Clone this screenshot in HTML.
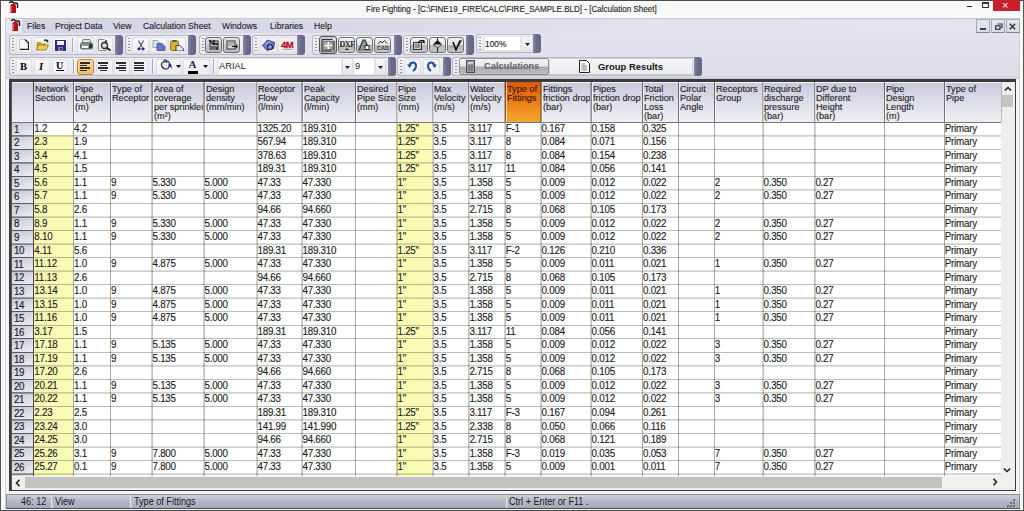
<!DOCTYPE html><html><head><meta charset="utf-8"><style>

*{box-sizing:border-box;margin:0;padding:0}
html,body{width:1024px;height:511px;overflow:hidden;background:#f3f3f6;font-family:"Liberation Sans",sans-serif;color:#222}
.a{position:absolute}
.t{position:absolute;white-space:pre;line-height:1}
.k{-webkit-text-stroke:0.12px currentColor}

</style></head><body>
<div class="a" style="left:0;top:0;width:1024px;height:511px;background:#f9f9f9"></div>
<div class="a" style="left:0;top:0;width:1024px;height:1px;background:#4a4a4a"></div>
<div class="a" style="left:0;top:0;width:1px;height:511px;background:#555"></div>
<div class="a" style="left:1023px;top:0;width:1px;height:511px;background:#555"></div>
<div class="a" style="left:0;top:510px;width:1024px;height:1px;background:#4a4a4a"></div>
<div class="a" style="left:5px;top:18px;width:1015px;height:492px;background:#f6f6f8;border-left:1px solid #cfcfd8;border-top:1px solid #c8c8d2;border-right:1px solid #d0d0d8"></div>
<div class="a" style="left:6px;top:19px;width:1013px;height:57px;background:linear-gradient(#e4e4ee,#dedee8)"></div>
<div class="a" style="left:6px;top:76px;width:1013px;height:3px;background:linear-gradient(#dcdce6,#c8c8d0)"></div>
<div class="a" style="left:9px;top:79px;width:1007px;height:412px;background:#3a3a3a"></div>
<div class="a" style="left:11px;top:82px;width:1px;height:407px;background:#5a5a5a"></div>
<div class="a" style="left:12px;top:82px;width:989px;height:40px;background:linear-gradient(#c8c8da,#dadae6 40%,#e8e8ef 80%,#eeeef2)"></div>
<div class="a" style="left:12px;top:82px;width:989px;height:1px;background:#f4f4f8"></div>
<div class="a" style="left:12px;top:122px;width:989px;height:354px;background:#fff"></div>
<div class="a" style="left:1001px;top:82px;width:14px;height:394px;background:#eeeeee"></div>
<div class="a" style="left:34px;top:135px;width:39px;height:341px;background:#fafcb6"></div>
<div class="a" style="left:396px;top:122px;width:36px;height:354px;background:#fafcb6"></div>
<div class="a" style="left:505px;top:82px;width:36px;height:40px;background:linear-gradient(#dc5a08,#ea7a14 45%,#f29a2a 85%,#f4a636)"></div>
<div class="a" style="left:12px;top:122px;width:22px;height:13px;background:linear-gradient(165deg,#c4c4d6,#dcdce6 55%,#ececf2)"></div>
<div class="a" style="left:12px;top:135px;width:22px;height:14px;background:linear-gradient(165deg,#c4c4d6,#dcdce6 55%,#ececf2)"></div>
<div class="a" style="left:12px;top:149px;width:22px;height:13px;background:linear-gradient(165deg,#c4c4d6,#dcdce6 55%,#ececf2)"></div>
<div class="a" style="left:12px;top:162px;width:22px;height:14px;background:linear-gradient(165deg,#c4c4d6,#dcdce6 55%,#ececf2)"></div>
<div class="a" style="left:12px;top:176px;width:22px;height:13px;background:linear-gradient(165deg,#c4c4d6,#dcdce6 55%,#ececf2)"></div>
<div class="a" style="left:12px;top:189px;width:22px;height:14px;background:linear-gradient(165deg,#c4c4d6,#dcdce6 55%,#ececf2)"></div>
<div class="a" style="left:12px;top:203px;width:22px;height:14px;background:linear-gradient(165deg,#c4c4d6,#dcdce6 55%,#ececf2)"></div>
<div class="a" style="left:12px;top:217px;width:22px;height:13px;background:linear-gradient(165deg,#c4c4d6,#dcdce6 55%,#ececf2)"></div>
<div class="a" style="left:12px;top:230px;width:22px;height:14px;background:linear-gradient(165deg,#c4c4d6,#dcdce6 55%,#ececf2)"></div>
<div class="a" style="left:12px;top:244px;width:22px;height:13px;background:linear-gradient(165deg,#c4c4d6,#dcdce6 55%,#ececf2)"></div>
<div class="a" style="left:12px;top:257px;width:22px;height:14px;background:linear-gradient(165deg,#c4c4d6,#dcdce6 55%,#ececf2)"></div>
<div class="a" style="left:12px;top:271px;width:22px;height:13px;background:linear-gradient(165deg,#c4c4d6,#dcdce6 55%,#ececf2)"></div>
<div class="a" style="left:12px;top:284px;width:22px;height:14px;background:linear-gradient(165deg,#c4c4d6,#dcdce6 55%,#ececf2)"></div>
<div class="a" style="left:12px;top:298px;width:22px;height:13px;background:linear-gradient(165deg,#c4c4d6,#dcdce6 55%,#ececf2)"></div>
<div class="a" style="left:12px;top:311px;width:22px;height:14px;background:linear-gradient(165deg,#c4c4d6,#dcdce6 55%,#ececf2)"></div>
<div class="a" style="left:12px;top:325px;width:22px;height:13px;background:linear-gradient(165deg,#c4c4d6,#dcdce6 55%,#ececf2)"></div>
<div class="a" style="left:12px;top:338px;width:22px;height:14px;background:linear-gradient(165deg,#c4c4d6,#dcdce6 55%,#ececf2)"></div>
<div class="a" style="left:12px;top:352px;width:22px;height:13px;background:linear-gradient(165deg,#c4c4d6,#dcdce6 55%,#ececf2)"></div>
<div class="a" style="left:12px;top:365px;width:22px;height:14px;background:linear-gradient(165deg,#c4c4d6,#dcdce6 55%,#ececf2)"></div>
<div class="a" style="left:12px;top:379px;width:22px;height:13px;background:linear-gradient(165deg,#c4c4d6,#dcdce6 55%,#ececf2)"></div>
<div class="a" style="left:12px;top:392px;width:22px;height:14px;background:linear-gradient(165deg,#c4c4d6,#dcdce6 55%,#ececf2)"></div>
<div class="a" style="left:12px;top:406px;width:22px;height:13px;background:linear-gradient(165deg,#c4c4d6,#dcdce6 55%,#ececf2)"></div>
<div class="a" style="left:12px;top:419px;width:22px;height:14px;background:linear-gradient(165deg,#c4c4d6,#dcdce6 55%,#ececf2)"></div>
<div class="a" style="left:12px;top:433px;width:22px;height:14px;background:linear-gradient(165deg,#c4c4d6,#dcdce6 55%,#ececf2)"></div>
<div class="a" style="left:12px;top:447px;width:22px;height:13px;background:linear-gradient(165deg,#c4c4d6,#dcdce6 55%,#ececf2)"></div>
<div class="a" style="left:12px;top:460px;width:22px;height:14px;background:linear-gradient(165deg,#c4c4d6,#dcdce6 55%,#ececf2)"></div>
<div class="a" style="left:12px;top:474px;width:22px;height:2px;background:linear-gradient(165deg,#c4c4d6,#dcdce6 55%,#ececf2)"></div>
<div class="a" style="left:33px;top:82px;width:1px;height:394px;background:rgba(70,70,70,1.00)"></div>
<div class="a" style="left:73px;top:122px;width:1px;height:354px;background:rgba(0,0,0,0.33)"></div>
<div class="a" style="left:73px;top:82px;width:1px;height:40px;background:rgba(0,0,0,0.50)"></div>
<div class="a" style="left:74px;top:82px;width:1px;height:40px;background:rgba(255,255,255,0.6)"></div>
<div class="a" style="left:110px;top:122px;width:1px;height:354px;background:rgba(0,0,0,0.33)"></div>
<div class="a" style="left:110px;top:82px;width:1px;height:40px;background:rgba(0,0,0,0.50)"></div>
<div class="a" style="left:111px;top:82px;width:1px;height:40px;background:rgba(255,255,255,0.6)"></div>
<div class="a" style="left:151px;top:122px;width:1px;height:354px;background:rgba(0,0,0,0.17)"></div>
<div class="a" style="left:152px;top:122px;width:1px;height:354px;background:rgba(0,0,0,0.24)"></div>
<div class="a" style="left:151px;top:82px;width:1px;height:40px;background:rgba(0,0,0,0.25)"></div>
<div class="a" style="left:152px;top:82px;width:1px;height:40px;background:rgba(0,0,0,0.36)"></div>
<div class="a" style="left:153px;top:82px;width:1px;height:40px;background:rgba(255,255,255,0.6)"></div>
<div class="a" style="left:203px;top:122px;width:1px;height:354px;background:rgba(0,0,0,0.17)"></div>
<div class="a" style="left:204px;top:122px;width:1px;height:354px;background:rgba(0,0,0,0.24)"></div>
<div class="a" style="left:203px;top:82px;width:1px;height:40px;background:rgba(0,0,0,0.25)"></div>
<div class="a" style="left:204px;top:82px;width:1px;height:40px;background:rgba(0,0,0,0.36)"></div>
<div class="a" style="left:205px;top:82px;width:1px;height:40px;background:rgba(255,255,255,0.6)"></div>
<div class="a" style="left:256px;top:122px;width:1px;height:354px;background:rgba(0,0,0,0.17)"></div>
<div class="a" style="left:257px;top:122px;width:1px;height:354px;background:rgba(0,0,0,0.24)"></div>
<div class="a" style="left:256px;top:82px;width:1px;height:40px;background:rgba(0,0,0,0.25)"></div>
<div class="a" style="left:257px;top:82px;width:1px;height:40px;background:rgba(0,0,0,0.36)"></div>
<div class="a" style="left:257px;top:82px;width:1px;height:40px;background:rgba(255,255,255,0.6)"></div>
<div class="a" style="left:301px;top:122px;width:1px;height:354px;background:rgba(0,0,0,0.17)"></div>
<div class="a" style="left:302px;top:122px;width:1px;height:354px;background:rgba(0,0,0,0.24)"></div>
<div class="a" style="left:301px;top:82px;width:1px;height:40px;background:rgba(0,0,0,0.25)"></div>
<div class="a" style="left:302px;top:82px;width:1px;height:40px;background:rgba(0,0,0,0.36)"></div>
<div class="a" style="left:303px;top:82px;width:1px;height:40px;background:rgba(255,255,255,0.6)"></div>
<div class="a" style="left:355px;top:122px;width:1px;height:354px;background:rgba(0,0,0,0.33)"></div>
<div class="a" style="left:355px;top:82px;width:1px;height:40px;background:rgba(0,0,0,0.50)"></div>
<div class="a" style="left:356px;top:82px;width:1px;height:40px;background:rgba(255,255,255,0.6)"></div>
<div class="a" style="left:396px;top:122px;width:1px;height:354px;background:rgba(0,0,0,0.17)"></div>
<div class="a" style="left:397px;top:122px;width:1px;height:354px;background:rgba(0,0,0,0.24)"></div>
<div class="a" style="left:396px;top:82px;width:1px;height:40px;background:rgba(0,0,0,0.25)"></div>
<div class="a" style="left:397px;top:82px;width:1px;height:40px;background:rgba(0,0,0,0.36)"></div>
<div class="a" style="left:397px;top:82px;width:1px;height:40px;background:rgba(255,255,255,0.6)"></div>
<div class="a" style="left:432px;top:122px;width:1px;height:354px;background:rgba(0,0,0,0.17)"></div>
<div class="a" style="left:433px;top:122px;width:1px;height:354px;background:rgba(0,0,0,0.24)"></div>
<div class="a" style="left:432px;top:82px;width:1px;height:40px;background:rgba(0,0,0,0.25)"></div>
<div class="a" style="left:433px;top:82px;width:1px;height:40px;background:rgba(0,0,0,0.36)"></div>
<div class="a" style="left:433px;top:82px;width:1px;height:40px;background:rgba(255,255,255,0.6)"></div>
<div class="a" style="left:468px;top:122px;width:1px;height:354px;background:rgba(0,0,0,0.24)"></div>
<div class="a" style="left:469px;top:122px;width:1px;height:354px;background:rgba(0,0,0,0.17)"></div>
<div class="a" style="left:468px;top:82px;width:1px;height:40px;background:rgba(0,0,0,0.36)"></div>
<div class="a" style="left:469px;top:82px;width:1px;height:40px;background:rgba(0,0,0,0.25)"></div>
<div class="a" style="left:469px;top:82px;width:1px;height:40px;background:rgba(255,255,255,0.6)"></div>
<div class="a" style="left:504px;top:122px;width:1px;height:354px;background:rgba(0,0,0,0.17)"></div>
<div class="a" style="left:505px;top:122px;width:1px;height:354px;background:rgba(0,0,0,0.24)"></div>
<div class="a" style="left:504px;top:82px;width:1px;height:40px;background:rgba(0,0,0,0.25)"></div>
<div class="a" style="left:505px;top:82px;width:1px;height:40px;background:rgba(0,0,0,0.36)"></div>
<div class="a" style="left:506px;top:82px;width:1px;height:40px;background:rgba(255,255,255,0.6)"></div>
<div class="a" style="left:540px;top:122px;width:1px;height:354px;background:rgba(0,0,0,0.17)"></div>
<div class="a" style="left:541px;top:122px;width:1px;height:354px;background:rgba(0,0,0,0.24)"></div>
<div class="a" style="left:540px;top:82px;width:1px;height:40px;background:rgba(0,0,0,0.25)"></div>
<div class="a" style="left:541px;top:82px;width:1px;height:40px;background:rgba(0,0,0,0.36)"></div>
<div class="a" style="left:542px;top:82px;width:1px;height:40px;background:rgba(255,255,255,0.6)"></div>
<div class="a" style="left:590px;top:122px;width:1px;height:354px;background:rgba(0,0,0,0.17)"></div>
<div class="a" style="left:591px;top:122px;width:1px;height:354px;background:rgba(0,0,0,0.24)"></div>
<div class="a" style="left:590px;top:82px;width:1px;height:40px;background:rgba(0,0,0,0.25)"></div>
<div class="a" style="left:591px;top:82px;width:1px;height:40px;background:rgba(0,0,0,0.36)"></div>
<div class="a" style="left:592px;top:82px;width:1px;height:40px;background:rgba(255,255,255,0.6)"></div>
<div class="a" style="left:642px;top:122px;width:1px;height:354px;background:rgba(0,0,0,0.33)"></div>
<div class="a" style="left:642px;top:82px;width:1px;height:40px;background:rgba(0,0,0,0.50)"></div>
<div class="a" style="left:643px;top:82px;width:1px;height:40px;background:rgba(255,255,255,0.6)"></div>
<div class="a" style="left:678px;top:122px;width:1px;height:354px;background:rgba(0,0,0,0.33)"></div>
<div class="a" style="left:678px;top:82px;width:1px;height:40px;background:rgba(0,0,0,0.50)"></div>
<div class="a" style="left:679px;top:82px;width:1px;height:40px;background:rgba(255,255,255,0.6)"></div>
<div class="a" style="left:714px;top:122px;width:1px;height:354px;background:rgba(0,0,0,0.33)"></div>
<div class="a" style="left:714px;top:82px;width:1px;height:40px;background:rgba(0,0,0,0.50)"></div>
<div class="a" style="left:715px;top:82px;width:1px;height:40px;background:rgba(255,255,255,0.6)"></div>
<div class="a" style="left:762px;top:122px;width:1px;height:354px;background:rgba(0,0,0,0.17)"></div>
<div class="a" style="left:763px;top:122px;width:1px;height:354px;background:rgba(0,0,0,0.24)"></div>
<div class="a" style="left:762px;top:82px;width:1px;height:40px;background:rgba(0,0,0,0.25)"></div>
<div class="a" style="left:763px;top:82px;width:1px;height:40px;background:rgba(0,0,0,0.36)"></div>
<div class="a" style="left:763px;top:82px;width:1px;height:40px;background:rgba(255,255,255,0.6)"></div>
<div class="a" style="left:814px;top:122px;width:1px;height:354px;background:rgba(0,0,0,0.24)"></div>
<div class="a" style="left:815px;top:122px;width:1px;height:354px;background:rgba(0,0,0,0.17)"></div>
<div class="a" style="left:814px;top:82px;width:1px;height:40px;background:rgba(0,0,0,0.36)"></div>
<div class="a" style="left:815px;top:82px;width:1px;height:40px;background:rgba(0,0,0,0.25)"></div>
<div class="a" style="left:815px;top:82px;width:1px;height:40px;background:rgba(255,255,255,0.6)"></div>
<div class="a" style="left:884px;top:122px;width:1px;height:354px;background:rgba(0,0,0,0.33)"></div>
<div class="a" style="left:884px;top:82px;width:1px;height:40px;background:rgba(0,0,0,0.50)"></div>
<div class="a" style="left:885px;top:82px;width:1px;height:40px;background:rgba(255,255,255,0.6)"></div>
<div class="a" style="left:944px;top:122px;width:1px;height:354px;background:rgba(0,0,0,0.33)"></div>
<div class="a" style="left:944px;top:82px;width:1px;height:40px;background:rgba(0,0,0,0.50)"></div>
<div class="a" style="left:945px;top:82px;width:1px;height:40px;background:rgba(255,255,255,0.6)"></div>
<div class="a" style="left:1001px;top:82px;width:1px;height:40px;background:rgba(150,150,150,0.60)"></div>
<div class="a" style="left:12px;top:122px;width:989px;height:1px;background:rgba(120,120,120,1.00)"></div>
<div class="a" style="left:34px;top:135px;width:967px;height:1px;background:rgba(0,0,0,0.19)"></div>
<div class="a" style="left:34px;top:136px;width:967px;height:1px;background:rgba(0,0,0,0.13)"></div>
<div class="a" style="left:12px;top:135px;width:22px;height:1px;background:rgba(90,90,90,0.72)"></div>
<div class="a" style="left:12px;top:136px;width:22px;height:1px;background:rgba(90,90,90,0.50)"></div>
<div class="a" style="left:34px;top:149px;width:967px;height:1px;background:rgba(0,0,0,0.26)"></div>
<div class="a" style="left:12px;top:149px;width:22px;height:1px;background:rgba(90,90,90,1.00)"></div>
<div class="a" style="left:34px;top:162px;width:967px;height:1px;background:rgba(0,0,0,0.19)"></div>
<div class="a" style="left:34px;top:163px;width:967px;height:1px;background:rgba(0,0,0,0.13)"></div>
<div class="a" style="left:12px;top:162px;width:22px;height:1px;background:rgba(90,90,90,0.72)"></div>
<div class="a" style="left:12px;top:163px;width:22px;height:1px;background:rgba(90,90,90,0.50)"></div>
<div class="a" style="left:34px;top:176px;width:967px;height:1px;background:rgba(0,0,0,0.26)"></div>
<div class="a" style="left:12px;top:176px;width:22px;height:1px;background:rgba(90,90,90,1.00)"></div>
<div class="a" style="left:34px;top:189px;width:967px;height:1px;background:rgba(0,0,0,0.19)"></div>
<div class="a" style="left:34px;top:190px;width:967px;height:1px;background:rgba(0,0,0,0.13)"></div>
<div class="a" style="left:12px;top:189px;width:22px;height:1px;background:rgba(90,90,90,0.72)"></div>
<div class="a" style="left:12px;top:190px;width:22px;height:1px;background:rgba(90,90,90,0.50)"></div>
<div class="a" style="left:34px;top:203px;width:967px;height:1px;background:rgba(0,0,0,0.26)"></div>
<div class="a" style="left:12px;top:203px;width:22px;height:1px;background:rgba(90,90,90,1.00)"></div>
<div class="a" style="left:34px;top:216px;width:967px;height:1px;background:rgba(0,0,0,0.13)"></div>
<div class="a" style="left:34px;top:217px;width:967px;height:1px;background:rgba(0,0,0,0.19)"></div>
<div class="a" style="left:12px;top:216px;width:22px;height:1px;background:rgba(90,90,90,0.50)"></div>
<div class="a" style="left:12px;top:217px;width:22px;height:1px;background:rgba(90,90,90,0.72)"></div>
<div class="a" style="left:34px;top:230px;width:967px;height:1px;background:rgba(0,0,0,0.26)"></div>
<div class="a" style="left:12px;top:230px;width:22px;height:1px;background:rgba(90,90,90,1.00)"></div>
<div class="a" style="left:34px;top:243px;width:967px;height:1px;background:rgba(0,0,0,0.13)"></div>
<div class="a" style="left:34px;top:244px;width:967px;height:1px;background:rgba(0,0,0,0.19)"></div>
<div class="a" style="left:12px;top:243px;width:22px;height:1px;background:rgba(90,90,90,0.50)"></div>
<div class="a" style="left:12px;top:244px;width:22px;height:1px;background:rgba(90,90,90,0.72)"></div>
<div class="a" style="left:34px;top:257px;width:967px;height:1px;background:rgba(0,0,0,0.26)"></div>
<div class="a" style="left:12px;top:257px;width:22px;height:1px;background:rgba(90,90,90,1.00)"></div>
<div class="a" style="left:34px;top:270px;width:967px;height:1px;background:rgba(0,0,0,0.13)"></div>
<div class="a" style="left:34px;top:271px;width:967px;height:1px;background:rgba(0,0,0,0.19)"></div>
<div class="a" style="left:12px;top:270px;width:22px;height:1px;background:rgba(90,90,90,0.50)"></div>
<div class="a" style="left:12px;top:271px;width:22px;height:1px;background:rgba(90,90,90,0.72)"></div>
<div class="a" style="left:34px;top:284px;width:967px;height:1px;background:rgba(0,0,0,0.26)"></div>
<div class="a" style="left:12px;top:284px;width:22px;height:1px;background:rgba(90,90,90,1.00)"></div>
<div class="a" style="left:34px;top:297px;width:967px;height:1px;background:rgba(0,0,0,0.13)"></div>
<div class="a" style="left:34px;top:298px;width:967px;height:1px;background:rgba(0,0,0,0.19)"></div>
<div class="a" style="left:12px;top:297px;width:22px;height:1px;background:rgba(90,90,90,0.50)"></div>
<div class="a" style="left:12px;top:298px;width:22px;height:1px;background:rgba(90,90,90,0.72)"></div>
<div class="a" style="left:34px;top:311px;width:967px;height:1px;background:rgba(0,0,0,0.26)"></div>
<div class="a" style="left:12px;top:311px;width:22px;height:1px;background:rgba(90,90,90,1.00)"></div>
<div class="a" style="left:34px;top:325px;width:967px;height:1px;background:rgba(0,0,0,0.26)"></div>
<div class="a" style="left:12px;top:325px;width:22px;height:1px;background:rgba(90,90,90,1.00)"></div>
<div class="a" style="left:34px;top:338px;width:967px;height:1px;background:rgba(0,0,0,0.26)"></div>
<div class="a" style="left:12px;top:338px;width:22px;height:1px;background:rgba(90,90,90,1.00)"></div>
<div class="a" style="left:34px;top:352px;width:967px;height:1px;background:rgba(0,0,0,0.26)"></div>
<div class="a" style="left:12px;top:352px;width:22px;height:1px;background:rgba(90,90,90,1.00)"></div>
<div class="a" style="left:34px;top:365px;width:967px;height:1px;background:rgba(0,0,0,0.19)"></div>
<div class="a" style="left:34px;top:366px;width:967px;height:1px;background:rgba(0,0,0,0.13)"></div>
<div class="a" style="left:12px;top:365px;width:22px;height:1px;background:rgba(90,90,90,0.72)"></div>
<div class="a" style="left:12px;top:366px;width:22px;height:1px;background:rgba(90,90,90,0.50)"></div>
<div class="a" style="left:34px;top:379px;width:967px;height:1px;background:rgba(0,0,0,0.26)"></div>
<div class="a" style="left:12px;top:379px;width:22px;height:1px;background:rgba(90,90,90,1.00)"></div>
<div class="a" style="left:34px;top:392px;width:967px;height:1px;background:rgba(0,0,0,0.19)"></div>
<div class="a" style="left:34px;top:393px;width:967px;height:1px;background:rgba(0,0,0,0.13)"></div>
<div class="a" style="left:12px;top:392px;width:22px;height:1px;background:rgba(90,90,90,0.72)"></div>
<div class="a" style="left:12px;top:393px;width:22px;height:1px;background:rgba(90,90,90,0.50)"></div>
<div class="a" style="left:34px;top:406px;width:967px;height:1px;background:rgba(0,0,0,0.26)"></div>
<div class="a" style="left:12px;top:406px;width:22px;height:1px;background:rgba(90,90,90,1.00)"></div>
<div class="a" style="left:34px;top:419px;width:967px;height:1px;background:rgba(0,0,0,0.19)"></div>
<div class="a" style="left:34px;top:420px;width:967px;height:1px;background:rgba(0,0,0,0.13)"></div>
<div class="a" style="left:12px;top:419px;width:22px;height:1px;background:rgba(90,90,90,0.72)"></div>
<div class="a" style="left:12px;top:420px;width:22px;height:1px;background:rgba(90,90,90,0.50)"></div>
<div class="a" style="left:34px;top:433px;width:967px;height:1px;background:rgba(0,0,0,0.26)"></div>
<div class="a" style="left:12px;top:433px;width:22px;height:1px;background:rgba(90,90,90,1.00)"></div>
<div class="a" style="left:34px;top:446px;width:967px;height:1px;background:rgba(0,0,0,0.13)"></div>
<div class="a" style="left:34px;top:447px;width:967px;height:1px;background:rgba(0,0,0,0.19)"></div>
<div class="a" style="left:12px;top:446px;width:22px;height:1px;background:rgba(90,90,90,0.50)"></div>
<div class="a" style="left:12px;top:447px;width:22px;height:1px;background:rgba(90,90,90,0.72)"></div>
<div class="a" style="left:34px;top:460px;width:967px;height:1px;background:rgba(0,0,0,0.26)"></div>
<div class="a" style="left:12px;top:460px;width:22px;height:1px;background:rgba(90,90,90,1.00)"></div>
<div class="a" style="left:34px;top:473px;width:967px;height:1px;background:rgba(0,0,0,0.13)"></div>
<div class="a" style="left:34px;top:474px;width:967px;height:1px;background:rgba(0,0,0,0.19)"></div>
<div class="a" style="left:12px;top:473px;width:22px;height:1px;background:rgba(90,90,90,0.50)"></div>
<div class="a" style="left:12px;top:474px;width:22px;height:1px;background:rgba(90,90,90,0.72)"></div>
<div class="t k" style="left:35px;top:84.9px;width:38px;height:38px;overflow:hidden;font-size:9.15px;line-height:9.05px;color:#1e1e1e">Network<br>Section</div>
<div class="t k" style="left:75px;top:84.9px;width:35px;height:38px;overflow:hidden;font-size:9.15px;line-height:9.05px;color:#1e1e1e">Pipe<br>Length<br>(m)</div>
<div class="t k" style="left:112px;top:84.9px;width:39px;height:38px;overflow:hidden;font-size:9.15px;line-height:9.05px;color:#1e1e1e">Type of<br>Receptor</div>
<div class="t k" style="left:154px;top:84.9px;width:49px;height:38px;overflow:hidden;font-size:9.15px;line-height:9.05px;color:#1e1e1e">Area of<br>coverage<br>per sprinkler<br>(m&sup2;)</div>
<div class="t k" style="left:206px;top:84.9px;width:50px;height:38px;overflow:hidden;font-size:9.15px;line-height:9.05px;color:#1e1e1e">Design<br>density<br>(mm/min)</div>
<div class="t k" style="left:258px;top:84.9px;width:43px;height:38px;overflow:hidden;font-size:9.15px;line-height:9.05px;color:#1e1e1e">Receptor<br>Flow<br>(l/min)</div>
<div class="t k" style="left:304px;top:84.9px;width:50px;height:38px;overflow:hidden;font-size:9.15px;line-height:9.05px;color:#1e1e1e">Peak<br>Capacity<br>(l/min)</div>
<div class="t k" style="left:357px;top:84.9px;width:39px;height:38px;overflow:hidden;font-size:9.15px;line-height:9.05px;color:#1e1e1e">Desired<br>Pipe Size<br>(mm)</div>
<div class="t k" style="left:398px;top:84.9px;width:34px;height:38px;overflow:hidden;font-size:9.15px;line-height:9.05px;color:#1e1e1e">Pipe<br>Size<br>(mm)</div>
<div class="t k" style="left:434px;top:84.9px;width:34px;height:38px;overflow:hidden;font-size:9.15px;line-height:9.05px;color:#1e1e1e">Max<br>Velocity<br>(m/s)</div>
<div class="t k" style="left:470px;top:84.9px;width:34px;height:38px;overflow:hidden;font-size:9.15px;line-height:9.05px;color:#1e1e1e">Water<br>Velocity<br>(m/s)</div>
<div class="t k" style="left:507px;top:84.9px;width:33px;height:38px;overflow:hidden;font-size:9.15px;line-height:9.05px;color:#3a1804">Type of<br>Fittings</div>
<div class="t k" style="left:543px;top:84.9px;width:47px;height:38px;overflow:hidden;font-size:9.15px;line-height:9.05px;color:#1e1e1e">Fittings<br>friction drop<br>(bar)</div>
<div class="t k" style="left:593px;top:84.9px;width:49px;height:38px;overflow:hidden;font-size:9.15px;line-height:9.05px;color:#1e1e1e">Pipes<br>friction drop<br>(bar)</div>
<div class="t k" style="left:644px;top:84.9px;width:33px;height:38px;overflow:hidden;font-size:9.15px;line-height:9.05px;color:#1e1e1e">Total<br>Friction<br>Loss<br>(bar)</div>
<div class="t k" style="left:680px;top:84.9px;width:33px;height:38px;overflow:hidden;font-size:9.15px;line-height:9.05px;color:#1e1e1e">Circuit<br>Polar<br>Angle</div>
<div class="t k" style="left:716px;top:84.9px;width:46px;height:38px;overflow:hidden;font-size:9.15px;line-height:9.05px;color:#1e1e1e">Receptors<br>Group</div>
<div class="t k" style="left:764px;top:84.9px;width:50px;height:38px;overflow:hidden;font-size:9.15px;line-height:9.05px;color:#1e1e1e">Required<br>discharge<br>pressure<br>(bar)</div>
<div class="t k" style="left:816px;top:84.9px;width:67px;height:38px;overflow:hidden;font-size:9.15px;line-height:9.05px;color:#1e1e1e">DP due to<br>Different<br>Height<br>(bar)</div>
<div class="t k" style="left:886px;top:84.9px;width:57px;height:38px;overflow:hidden;font-size:9.15px;line-height:9.05px;color:#1e1e1e">Pipe<br>Design<br>Length<br>(m)</div>
<div class="t k" style="left:946px;top:84.9px;width:54px;height:38px;overflow:hidden;font-size:9.15px;line-height:9.05px;color:#1e1e1e">Type of<br>Pipe</div>
<div class="t k" style="left:14px;top:124.6px;font-size:9.8px;letter-spacing:-0.5px;transform:scaleY(1.07);transform-origin:0 2px;color:#1a1a1a">1</div>
<div class="t k" style="left:34.3px;top:122.8px;font-size:9.8px;letter-spacing:-0.25px;transform:scaleY(1.16);transform-origin:0 2px;color:#1c1c1c">1.2</div>
<div class="t k" style="left:74.0px;top:122.8px;font-size:9.8px;letter-spacing:-0.25px;transform:scaleY(1.16);transform-origin:0 2px;color:#1c1c1c">4.2</div>
<div class="t k" style="left:257.5px;top:122.8px;font-size:9.8px;letter-spacing:-0.25px;transform:scaleY(1.16);transform-origin:0 2px;color:#1c1c1c">1325.20</div>
<div class="t k" style="left:302.5px;top:122.8px;font-size:9.8px;letter-spacing:-0.25px;transform:scaleY(1.16);transform-origin:0 2px;color:#1c1c1c">189.310</div>
<div class="t k" style="left:397.5px;top:122.8px;font-size:9.8px;letter-spacing:-0.25px;transform:scaleY(1.16);transform-origin:0 2px;color:#1c1c1c">1.25&quot;</div>
<div class="t k" style="left:433.5px;top:122.8px;font-size:9.8px;letter-spacing:-0.25px;transform:scaleY(1.16);transform-origin:0 2px;color:#1c1c1c">3.5</div>
<div class="t k" style="left:469.4px;top:122.8px;font-size:9.8px;letter-spacing:-0.25px;transform:scaleY(1.16);transform-origin:0 2px;color:#1c1c1c">3.117</div>
<div class="t k" style="left:505.7px;top:122.8px;font-size:9.8px;letter-spacing:-0.25px;transform:scaleY(1.16);transform-origin:0 2px;color:#1c1c1c">F-1</div>
<div class="t k" style="left:541.6px;top:122.8px;font-size:9.8px;letter-spacing:-0.25px;transform:scaleY(1.16);transform-origin:0 2px;color:#1c1c1c">0.167</div>
<div class="t k" style="left:591.6px;top:122.8px;font-size:9.8px;letter-spacing:-0.25px;transform:scaleY(1.16);transform-origin:0 2px;color:#1c1c1c">0.158</div>
<div class="t k" style="left:643.0px;top:122.8px;font-size:9.8px;letter-spacing:-0.25px;transform:scaleY(1.16);transform-origin:0 2px;color:#1c1c1c">0.325</div>
<div class="t k" style="left:944.8px;top:122.8px;font-size:9.8px;letter-spacing:-0.25px;transform:scaleY(1.16);transform-origin:0 2px;color:#1c1c1c">Primary</div>
<div class="t k" style="left:14px;top:138.1px;font-size:9.8px;letter-spacing:-0.5px;transform:scaleY(1.07);transform-origin:0 2px;color:#1a1a1a">2</div>
<div class="t k" style="left:34.3px;top:136.3px;font-size:9.8px;letter-spacing:-0.25px;transform:scaleY(1.16);transform-origin:0 2px;color:#1c1c1c">2.3</div>
<div class="t k" style="left:74.0px;top:136.3px;font-size:9.8px;letter-spacing:-0.25px;transform:scaleY(1.16);transform-origin:0 2px;color:#1c1c1c">1.9</div>
<div class="t k" style="left:257.5px;top:136.3px;font-size:9.8px;letter-spacing:-0.25px;transform:scaleY(1.16);transform-origin:0 2px;color:#1c1c1c">567.94</div>
<div class="t k" style="left:302.5px;top:136.3px;font-size:9.8px;letter-spacing:-0.25px;transform:scaleY(1.16);transform-origin:0 2px;color:#1c1c1c">189.310</div>
<div class="t k" style="left:397.5px;top:136.3px;font-size:9.8px;letter-spacing:-0.25px;transform:scaleY(1.16);transform-origin:0 2px;color:#1c1c1c">1.25&quot;</div>
<div class="t k" style="left:433.5px;top:136.3px;font-size:9.8px;letter-spacing:-0.25px;transform:scaleY(1.16);transform-origin:0 2px;color:#1c1c1c">3.5</div>
<div class="t k" style="left:469.4px;top:136.3px;font-size:9.8px;letter-spacing:-0.25px;transform:scaleY(1.16);transform-origin:0 2px;color:#1c1c1c">3.117</div>
<div class="t k" style="left:505.7px;top:136.3px;font-size:9.8px;letter-spacing:-0.25px;transform:scaleY(1.16);transform-origin:0 2px;color:#1c1c1c">8</div>
<div class="t k" style="left:541.6px;top:136.3px;font-size:9.8px;letter-spacing:-0.25px;transform:scaleY(1.16);transform-origin:0 2px;color:#1c1c1c">0.084</div>
<div class="t k" style="left:591.6px;top:136.3px;font-size:9.8px;letter-spacing:-0.25px;transform:scaleY(1.16);transform-origin:0 2px;color:#1c1c1c">0.071</div>
<div class="t k" style="left:643.0px;top:136.3px;font-size:9.8px;letter-spacing:-0.25px;transform:scaleY(1.16);transform-origin:0 2px;color:#1c1c1c">0.156</div>
<div class="t k" style="left:944.8px;top:136.3px;font-size:9.8px;letter-spacing:-0.25px;transform:scaleY(1.16);transform-origin:0 2px;color:#1c1c1c">Primary</div>
<div class="t k" style="left:14px;top:151.7px;font-size:9.8px;letter-spacing:-0.5px;transform:scaleY(1.07);transform-origin:0 2px;color:#1a1a1a">3</div>
<div class="t k" style="left:34.3px;top:149.9px;font-size:9.8px;letter-spacing:-0.25px;transform:scaleY(1.16);transform-origin:0 2px;color:#1c1c1c">3.4</div>
<div class="t k" style="left:74.0px;top:149.9px;font-size:9.8px;letter-spacing:-0.25px;transform:scaleY(1.16);transform-origin:0 2px;color:#1c1c1c">4.1</div>
<div class="t k" style="left:257.5px;top:149.9px;font-size:9.8px;letter-spacing:-0.25px;transform:scaleY(1.16);transform-origin:0 2px;color:#1c1c1c">378.63</div>
<div class="t k" style="left:302.5px;top:149.9px;font-size:9.8px;letter-spacing:-0.25px;transform:scaleY(1.16);transform-origin:0 2px;color:#1c1c1c">189.310</div>
<div class="t k" style="left:397.5px;top:149.9px;font-size:9.8px;letter-spacing:-0.25px;transform:scaleY(1.16);transform-origin:0 2px;color:#1c1c1c">1.25&quot;</div>
<div class="t k" style="left:433.5px;top:149.9px;font-size:9.8px;letter-spacing:-0.25px;transform:scaleY(1.16);transform-origin:0 2px;color:#1c1c1c">3.5</div>
<div class="t k" style="left:469.4px;top:149.9px;font-size:9.8px;letter-spacing:-0.25px;transform:scaleY(1.16);transform-origin:0 2px;color:#1c1c1c">3.117</div>
<div class="t k" style="left:505.7px;top:149.9px;font-size:9.8px;letter-spacing:-0.25px;transform:scaleY(1.16);transform-origin:0 2px;color:#1c1c1c">8</div>
<div class="t k" style="left:541.6px;top:149.9px;font-size:9.8px;letter-spacing:-0.25px;transform:scaleY(1.16);transform-origin:0 2px;color:#1c1c1c">0.084</div>
<div class="t k" style="left:591.6px;top:149.9px;font-size:9.8px;letter-spacing:-0.25px;transform:scaleY(1.16);transform-origin:0 2px;color:#1c1c1c">0.154</div>
<div class="t k" style="left:643.0px;top:149.9px;font-size:9.8px;letter-spacing:-0.25px;transform:scaleY(1.16);transform-origin:0 2px;color:#1c1c1c">0.238</div>
<div class="t k" style="left:944.8px;top:149.9px;font-size:9.8px;letter-spacing:-0.25px;transform:scaleY(1.16);transform-origin:0 2px;color:#1c1c1c">Primary</div>
<div class="t k" style="left:14px;top:165.2px;font-size:9.8px;letter-spacing:-0.5px;transform:scaleY(1.07);transform-origin:0 2px;color:#1a1a1a">4</div>
<div class="t k" style="left:34.3px;top:163.4px;font-size:9.8px;letter-spacing:-0.25px;transform:scaleY(1.16);transform-origin:0 2px;color:#1c1c1c">4.5</div>
<div class="t k" style="left:74.0px;top:163.4px;font-size:9.8px;letter-spacing:-0.25px;transform:scaleY(1.16);transform-origin:0 2px;color:#1c1c1c">1.5</div>
<div class="t k" style="left:257.5px;top:163.4px;font-size:9.8px;letter-spacing:-0.25px;transform:scaleY(1.16);transform-origin:0 2px;color:#1c1c1c">189.31</div>
<div class="t k" style="left:302.5px;top:163.4px;font-size:9.8px;letter-spacing:-0.25px;transform:scaleY(1.16);transform-origin:0 2px;color:#1c1c1c">189.310</div>
<div class="t k" style="left:397.5px;top:163.4px;font-size:9.8px;letter-spacing:-0.25px;transform:scaleY(1.16);transform-origin:0 2px;color:#1c1c1c">1.25&quot;</div>
<div class="t k" style="left:433.5px;top:163.4px;font-size:9.8px;letter-spacing:-0.25px;transform:scaleY(1.16);transform-origin:0 2px;color:#1c1c1c">3.5</div>
<div class="t k" style="left:469.4px;top:163.4px;font-size:9.8px;letter-spacing:-0.25px;transform:scaleY(1.16);transform-origin:0 2px;color:#1c1c1c">3.117</div>
<div class="t k" style="left:505.7px;top:163.4px;font-size:9.8px;letter-spacing:-0.25px;transform:scaleY(1.16);transform-origin:0 2px;color:#1c1c1c">11</div>
<div class="t k" style="left:541.6px;top:163.4px;font-size:9.8px;letter-spacing:-0.25px;transform:scaleY(1.16);transform-origin:0 2px;color:#1c1c1c">0.084</div>
<div class="t k" style="left:591.6px;top:163.4px;font-size:9.8px;letter-spacing:-0.25px;transform:scaleY(1.16);transform-origin:0 2px;color:#1c1c1c">0.056</div>
<div class="t k" style="left:643.0px;top:163.4px;font-size:9.8px;letter-spacing:-0.25px;transform:scaleY(1.16);transform-origin:0 2px;color:#1c1c1c">0.141</div>
<div class="t k" style="left:944.8px;top:163.4px;font-size:9.8px;letter-spacing:-0.25px;transform:scaleY(1.16);transform-origin:0 2px;color:#1c1c1c">Primary</div>
<div class="t k" style="left:14px;top:178.7px;font-size:9.8px;letter-spacing:-0.5px;transform:scaleY(1.07);transform-origin:0 2px;color:#1a1a1a">5</div>
<div class="t k" style="left:34.3px;top:176.9px;font-size:9.8px;letter-spacing:-0.25px;transform:scaleY(1.16);transform-origin:0 2px;color:#1c1c1c">5.6</div>
<div class="t k" style="left:74.0px;top:176.9px;font-size:9.8px;letter-spacing:-0.25px;transform:scaleY(1.16);transform-origin:0 2px;color:#1c1c1c">1.1</div>
<div class="t k" style="left:111.0px;top:176.9px;font-size:9.8px;letter-spacing:-0.25px;transform:scaleY(1.16);transform-origin:0 2px;color:#1c1c1c">9</div>
<div class="t k" style="left:152.5px;top:176.9px;font-size:9.8px;letter-spacing:-0.25px;transform:scaleY(1.16);transform-origin:0 2px;color:#1c1c1c">5.330</div>
<div class="t k" style="left:204.5px;top:176.9px;font-size:9.8px;letter-spacing:-0.25px;transform:scaleY(1.16);transform-origin:0 2px;color:#1c1c1c">5.000</div>
<div class="t k" style="left:257.5px;top:176.9px;font-size:9.8px;letter-spacing:-0.25px;transform:scaleY(1.16);transform-origin:0 2px;color:#1c1c1c">47.33</div>
<div class="t k" style="left:302.5px;top:176.9px;font-size:9.8px;letter-spacing:-0.25px;transform:scaleY(1.16);transform-origin:0 2px;color:#1c1c1c">47.330</div>
<div class="t k" style="left:397.5px;top:176.9px;font-size:9.8px;letter-spacing:-0.25px;transform:scaleY(1.16);transform-origin:0 2px;color:#1c1c1c">1&quot;</div>
<div class="t k" style="left:433.5px;top:176.9px;font-size:9.8px;letter-spacing:-0.25px;transform:scaleY(1.16);transform-origin:0 2px;color:#1c1c1c">3.5</div>
<div class="t k" style="left:469.4px;top:176.9px;font-size:9.8px;letter-spacing:-0.25px;transform:scaleY(1.16);transform-origin:0 2px;color:#1c1c1c">1.358</div>
<div class="t k" style="left:505.7px;top:176.9px;font-size:9.8px;letter-spacing:-0.25px;transform:scaleY(1.16);transform-origin:0 2px;color:#1c1c1c">5</div>
<div class="t k" style="left:541.6px;top:176.9px;font-size:9.8px;letter-spacing:-0.25px;transform:scaleY(1.16);transform-origin:0 2px;color:#1c1c1c">0.009</div>
<div class="t k" style="left:591.6px;top:176.9px;font-size:9.8px;letter-spacing:-0.25px;transform:scaleY(1.16);transform-origin:0 2px;color:#1c1c1c">0.012</div>
<div class="t k" style="left:643.0px;top:176.9px;font-size:9.8px;letter-spacing:-0.25px;transform:scaleY(1.16);transform-origin:0 2px;color:#1c1c1c">0.022</div>
<div class="t k" style="left:714.7px;top:176.9px;font-size:9.8px;letter-spacing:-0.25px;transform:scaleY(1.16);transform-origin:0 2px;color:#1c1c1c">2</div>
<div class="t k" style="left:763.5px;top:176.9px;font-size:9.8px;letter-spacing:-0.25px;transform:scaleY(1.16);transform-origin:0 2px;color:#1c1c1c">0.350</div>
<div class="t k" style="left:815.4px;top:176.9px;font-size:9.8px;letter-spacing:-0.25px;transform:scaleY(1.16);transform-origin:0 2px;color:#1c1c1c">0.27</div>
<div class="t k" style="left:944.8px;top:176.9px;font-size:9.8px;letter-spacing:-0.25px;transform:scaleY(1.16);transform-origin:0 2px;color:#1c1c1c">Primary</div>
<div class="t k" style="left:14px;top:192.2px;font-size:9.8px;letter-spacing:-0.5px;transform:scaleY(1.07);transform-origin:0 2px;color:#1a1a1a">6</div>
<div class="t k" style="left:34.3px;top:190.4px;font-size:9.8px;letter-spacing:-0.25px;transform:scaleY(1.16);transform-origin:0 2px;color:#1c1c1c">5.7</div>
<div class="t k" style="left:74.0px;top:190.4px;font-size:9.8px;letter-spacing:-0.25px;transform:scaleY(1.16);transform-origin:0 2px;color:#1c1c1c">1.1</div>
<div class="t k" style="left:111.0px;top:190.4px;font-size:9.8px;letter-spacing:-0.25px;transform:scaleY(1.16);transform-origin:0 2px;color:#1c1c1c">9</div>
<div class="t k" style="left:152.5px;top:190.4px;font-size:9.8px;letter-spacing:-0.25px;transform:scaleY(1.16);transform-origin:0 2px;color:#1c1c1c">5.330</div>
<div class="t k" style="left:204.5px;top:190.4px;font-size:9.8px;letter-spacing:-0.25px;transform:scaleY(1.16);transform-origin:0 2px;color:#1c1c1c">5.000</div>
<div class="t k" style="left:257.5px;top:190.4px;font-size:9.8px;letter-spacing:-0.25px;transform:scaleY(1.16);transform-origin:0 2px;color:#1c1c1c">47.33</div>
<div class="t k" style="left:302.5px;top:190.4px;font-size:9.8px;letter-spacing:-0.25px;transform:scaleY(1.16);transform-origin:0 2px;color:#1c1c1c">47.330</div>
<div class="t k" style="left:397.5px;top:190.4px;font-size:9.8px;letter-spacing:-0.25px;transform:scaleY(1.16);transform-origin:0 2px;color:#1c1c1c">1&quot;</div>
<div class="t k" style="left:433.5px;top:190.4px;font-size:9.8px;letter-spacing:-0.25px;transform:scaleY(1.16);transform-origin:0 2px;color:#1c1c1c">3.5</div>
<div class="t k" style="left:469.4px;top:190.4px;font-size:9.8px;letter-spacing:-0.25px;transform:scaleY(1.16);transform-origin:0 2px;color:#1c1c1c">1.358</div>
<div class="t k" style="left:505.7px;top:190.4px;font-size:9.8px;letter-spacing:-0.25px;transform:scaleY(1.16);transform-origin:0 2px;color:#1c1c1c">5</div>
<div class="t k" style="left:541.6px;top:190.4px;font-size:9.8px;letter-spacing:-0.25px;transform:scaleY(1.16);transform-origin:0 2px;color:#1c1c1c">0.009</div>
<div class="t k" style="left:591.6px;top:190.4px;font-size:9.8px;letter-spacing:-0.25px;transform:scaleY(1.16);transform-origin:0 2px;color:#1c1c1c">0.012</div>
<div class="t k" style="left:643.0px;top:190.4px;font-size:9.8px;letter-spacing:-0.25px;transform:scaleY(1.16);transform-origin:0 2px;color:#1c1c1c">0.022</div>
<div class="t k" style="left:714.7px;top:190.4px;font-size:9.8px;letter-spacing:-0.25px;transform:scaleY(1.16);transform-origin:0 2px;color:#1c1c1c">2</div>
<div class="t k" style="left:763.5px;top:190.4px;font-size:9.8px;letter-spacing:-0.25px;transform:scaleY(1.16);transform-origin:0 2px;color:#1c1c1c">0.350</div>
<div class="t k" style="left:815.4px;top:190.4px;font-size:9.8px;letter-spacing:-0.25px;transform:scaleY(1.16);transform-origin:0 2px;color:#1c1c1c">0.27</div>
<div class="t k" style="left:944.8px;top:190.4px;font-size:9.8px;letter-spacing:-0.25px;transform:scaleY(1.16);transform-origin:0 2px;color:#1c1c1c">Primary</div>
<div class="t k" style="left:14px;top:205.8px;font-size:9.8px;letter-spacing:-0.5px;transform:scaleY(1.07);transform-origin:0 2px;color:#1a1a1a">7</div>
<div class="t k" style="left:34.3px;top:204.0px;font-size:9.8px;letter-spacing:-0.25px;transform:scaleY(1.16);transform-origin:0 2px;color:#1c1c1c">5.8</div>
<div class="t k" style="left:74.0px;top:204.0px;font-size:9.8px;letter-spacing:-0.25px;transform:scaleY(1.16);transform-origin:0 2px;color:#1c1c1c">2.6</div>
<div class="t k" style="left:257.5px;top:204.0px;font-size:9.8px;letter-spacing:-0.25px;transform:scaleY(1.16);transform-origin:0 2px;color:#1c1c1c">94.66</div>
<div class="t k" style="left:302.5px;top:204.0px;font-size:9.8px;letter-spacing:-0.25px;transform:scaleY(1.16);transform-origin:0 2px;color:#1c1c1c">94.660</div>
<div class="t k" style="left:397.5px;top:204.0px;font-size:9.8px;letter-spacing:-0.25px;transform:scaleY(1.16);transform-origin:0 2px;color:#1c1c1c">1&quot;</div>
<div class="t k" style="left:433.5px;top:204.0px;font-size:9.8px;letter-spacing:-0.25px;transform:scaleY(1.16);transform-origin:0 2px;color:#1c1c1c">3.5</div>
<div class="t k" style="left:469.4px;top:204.0px;font-size:9.8px;letter-spacing:-0.25px;transform:scaleY(1.16);transform-origin:0 2px;color:#1c1c1c">2.715</div>
<div class="t k" style="left:505.7px;top:204.0px;font-size:9.8px;letter-spacing:-0.25px;transform:scaleY(1.16);transform-origin:0 2px;color:#1c1c1c">8</div>
<div class="t k" style="left:541.6px;top:204.0px;font-size:9.8px;letter-spacing:-0.25px;transform:scaleY(1.16);transform-origin:0 2px;color:#1c1c1c">0.068</div>
<div class="t k" style="left:591.6px;top:204.0px;font-size:9.8px;letter-spacing:-0.25px;transform:scaleY(1.16);transform-origin:0 2px;color:#1c1c1c">0.105</div>
<div class="t k" style="left:643.0px;top:204.0px;font-size:9.8px;letter-spacing:-0.25px;transform:scaleY(1.16);transform-origin:0 2px;color:#1c1c1c">0.173</div>
<div class="t k" style="left:944.8px;top:204.0px;font-size:9.8px;letter-spacing:-0.25px;transform:scaleY(1.16);transform-origin:0 2px;color:#1c1c1c">Primary</div>
<div class="t k" style="left:14px;top:219.3px;font-size:9.8px;letter-spacing:-0.5px;transform:scaleY(1.07);transform-origin:0 2px;color:#1a1a1a">8</div>
<div class="t k" style="left:34.3px;top:217.5px;font-size:9.8px;letter-spacing:-0.25px;transform:scaleY(1.16);transform-origin:0 2px;color:#1c1c1c">8.9</div>
<div class="t k" style="left:74.0px;top:217.5px;font-size:9.8px;letter-spacing:-0.25px;transform:scaleY(1.16);transform-origin:0 2px;color:#1c1c1c">1.1</div>
<div class="t k" style="left:111.0px;top:217.5px;font-size:9.8px;letter-spacing:-0.25px;transform:scaleY(1.16);transform-origin:0 2px;color:#1c1c1c">9</div>
<div class="t k" style="left:152.5px;top:217.5px;font-size:9.8px;letter-spacing:-0.25px;transform:scaleY(1.16);transform-origin:0 2px;color:#1c1c1c">5.330</div>
<div class="t k" style="left:204.5px;top:217.5px;font-size:9.8px;letter-spacing:-0.25px;transform:scaleY(1.16);transform-origin:0 2px;color:#1c1c1c">5.000</div>
<div class="t k" style="left:257.5px;top:217.5px;font-size:9.8px;letter-spacing:-0.25px;transform:scaleY(1.16);transform-origin:0 2px;color:#1c1c1c">47.33</div>
<div class="t k" style="left:302.5px;top:217.5px;font-size:9.8px;letter-spacing:-0.25px;transform:scaleY(1.16);transform-origin:0 2px;color:#1c1c1c">47.330</div>
<div class="t k" style="left:397.5px;top:217.5px;font-size:9.8px;letter-spacing:-0.25px;transform:scaleY(1.16);transform-origin:0 2px;color:#1c1c1c">1&quot;</div>
<div class="t k" style="left:433.5px;top:217.5px;font-size:9.8px;letter-spacing:-0.25px;transform:scaleY(1.16);transform-origin:0 2px;color:#1c1c1c">3.5</div>
<div class="t k" style="left:469.4px;top:217.5px;font-size:9.8px;letter-spacing:-0.25px;transform:scaleY(1.16);transform-origin:0 2px;color:#1c1c1c">1.358</div>
<div class="t k" style="left:505.7px;top:217.5px;font-size:9.8px;letter-spacing:-0.25px;transform:scaleY(1.16);transform-origin:0 2px;color:#1c1c1c">5</div>
<div class="t k" style="left:541.6px;top:217.5px;font-size:9.8px;letter-spacing:-0.25px;transform:scaleY(1.16);transform-origin:0 2px;color:#1c1c1c">0.009</div>
<div class="t k" style="left:591.6px;top:217.5px;font-size:9.8px;letter-spacing:-0.25px;transform:scaleY(1.16);transform-origin:0 2px;color:#1c1c1c">0.012</div>
<div class="t k" style="left:643.0px;top:217.5px;font-size:9.8px;letter-spacing:-0.25px;transform:scaleY(1.16);transform-origin:0 2px;color:#1c1c1c">0.022</div>
<div class="t k" style="left:714.7px;top:217.5px;font-size:9.8px;letter-spacing:-0.25px;transform:scaleY(1.16);transform-origin:0 2px;color:#1c1c1c">2</div>
<div class="t k" style="left:763.5px;top:217.5px;font-size:9.8px;letter-spacing:-0.25px;transform:scaleY(1.16);transform-origin:0 2px;color:#1c1c1c">0.350</div>
<div class="t k" style="left:815.4px;top:217.5px;font-size:9.8px;letter-spacing:-0.25px;transform:scaleY(1.16);transform-origin:0 2px;color:#1c1c1c">0.27</div>
<div class="t k" style="left:944.8px;top:217.5px;font-size:9.8px;letter-spacing:-0.25px;transform:scaleY(1.16);transform-origin:0 2px;color:#1c1c1c">Primary</div>
<div class="t k" style="left:14px;top:232.8px;font-size:9.8px;letter-spacing:-0.5px;transform:scaleY(1.07);transform-origin:0 2px;color:#1a1a1a">9</div>
<div class="t k" style="left:34.3px;top:231.0px;font-size:9.8px;letter-spacing:-0.25px;transform:scaleY(1.16);transform-origin:0 2px;color:#1c1c1c">8.10</div>
<div class="t k" style="left:74.0px;top:231.0px;font-size:9.8px;letter-spacing:-0.25px;transform:scaleY(1.16);transform-origin:0 2px;color:#1c1c1c">1.1</div>
<div class="t k" style="left:111.0px;top:231.0px;font-size:9.8px;letter-spacing:-0.25px;transform:scaleY(1.16);transform-origin:0 2px;color:#1c1c1c">9</div>
<div class="t k" style="left:152.5px;top:231.0px;font-size:9.8px;letter-spacing:-0.25px;transform:scaleY(1.16);transform-origin:0 2px;color:#1c1c1c">5.330</div>
<div class="t k" style="left:204.5px;top:231.0px;font-size:9.8px;letter-spacing:-0.25px;transform:scaleY(1.16);transform-origin:0 2px;color:#1c1c1c">5.000</div>
<div class="t k" style="left:257.5px;top:231.0px;font-size:9.8px;letter-spacing:-0.25px;transform:scaleY(1.16);transform-origin:0 2px;color:#1c1c1c">47.33</div>
<div class="t k" style="left:302.5px;top:231.0px;font-size:9.8px;letter-spacing:-0.25px;transform:scaleY(1.16);transform-origin:0 2px;color:#1c1c1c">47.330</div>
<div class="t k" style="left:397.5px;top:231.0px;font-size:9.8px;letter-spacing:-0.25px;transform:scaleY(1.16);transform-origin:0 2px;color:#1c1c1c">1&quot;</div>
<div class="t k" style="left:433.5px;top:231.0px;font-size:9.8px;letter-spacing:-0.25px;transform:scaleY(1.16);transform-origin:0 2px;color:#1c1c1c">3.5</div>
<div class="t k" style="left:469.4px;top:231.0px;font-size:9.8px;letter-spacing:-0.25px;transform:scaleY(1.16);transform-origin:0 2px;color:#1c1c1c">1.358</div>
<div class="t k" style="left:505.7px;top:231.0px;font-size:9.8px;letter-spacing:-0.25px;transform:scaleY(1.16);transform-origin:0 2px;color:#1c1c1c">5</div>
<div class="t k" style="left:541.6px;top:231.0px;font-size:9.8px;letter-spacing:-0.25px;transform:scaleY(1.16);transform-origin:0 2px;color:#1c1c1c">0.009</div>
<div class="t k" style="left:591.6px;top:231.0px;font-size:9.8px;letter-spacing:-0.25px;transform:scaleY(1.16);transform-origin:0 2px;color:#1c1c1c">0.012</div>
<div class="t k" style="left:643.0px;top:231.0px;font-size:9.8px;letter-spacing:-0.25px;transform:scaleY(1.16);transform-origin:0 2px;color:#1c1c1c">0.022</div>
<div class="t k" style="left:714.7px;top:231.0px;font-size:9.8px;letter-spacing:-0.25px;transform:scaleY(1.16);transform-origin:0 2px;color:#1c1c1c">2</div>
<div class="t k" style="left:763.5px;top:231.0px;font-size:9.8px;letter-spacing:-0.25px;transform:scaleY(1.16);transform-origin:0 2px;color:#1c1c1c">0.350</div>
<div class="t k" style="left:815.4px;top:231.0px;font-size:9.8px;letter-spacing:-0.25px;transform:scaleY(1.16);transform-origin:0 2px;color:#1c1c1c">0.27</div>
<div class="t k" style="left:944.8px;top:231.0px;font-size:9.8px;letter-spacing:-0.25px;transform:scaleY(1.16);transform-origin:0 2px;color:#1c1c1c">Primary</div>
<div class="t k" style="left:14px;top:246.4px;font-size:9.8px;letter-spacing:-0.5px;transform:scaleY(1.07);transform-origin:0 2px;color:#1a1a1a">10</div>
<div class="t k" style="left:34.3px;top:244.6px;font-size:9.8px;letter-spacing:-0.25px;transform:scaleY(1.16);transform-origin:0 2px;color:#1c1c1c">4.11</div>
<div class="t k" style="left:74.0px;top:244.6px;font-size:9.8px;letter-spacing:-0.25px;transform:scaleY(1.16);transform-origin:0 2px;color:#1c1c1c">5.6</div>
<div class="t k" style="left:257.5px;top:244.6px;font-size:9.8px;letter-spacing:-0.25px;transform:scaleY(1.16);transform-origin:0 2px;color:#1c1c1c">189.31</div>
<div class="t k" style="left:302.5px;top:244.6px;font-size:9.8px;letter-spacing:-0.25px;transform:scaleY(1.16);transform-origin:0 2px;color:#1c1c1c">189.310</div>
<div class="t k" style="left:397.5px;top:244.6px;font-size:9.8px;letter-spacing:-0.25px;transform:scaleY(1.16);transform-origin:0 2px;color:#1c1c1c">1.25&quot;</div>
<div class="t k" style="left:433.5px;top:244.6px;font-size:9.8px;letter-spacing:-0.25px;transform:scaleY(1.16);transform-origin:0 2px;color:#1c1c1c">3.5</div>
<div class="t k" style="left:469.4px;top:244.6px;font-size:9.8px;letter-spacing:-0.25px;transform:scaleY(1.16);transform-origin:0 2px;color:#1c1c1c">3.117</div>
<div class="t k" style="left:505.7px;top:244.6px;font-size:9.8px;letter-spacing:-0.25px;transform:scaleY(1.16);transform-origin:0 2px;color:#1c1c1c">F-2</div>
<div class="t k" style="left:541.6px;top:244.6px;font-size:9.8px;letter-spacing:-0.25px;transform:scaleY(1.16);transform-origin:0 2px;color:#1c1c1c">0.126</div>
<div class="t k" style="left:591.6px;top:244.6px;font-size:9.8px;letter-spacing:-0.25px;transform:scaleY(1.16);transform-origin:0 2px;color:#1c1c1c">0.210</div>
<div class="t k" style="left:643.0px;top:244.6px;font-size:9.8px;letter-spacing:-0.25px;transform:scaleY(1.16);transform-origin:0 2px;color:#1c1c1c">0.336</div>
<div class="t k" style="left:944.8px;top:244.6px;font-size:9.8px;letter-spacing:-0.25px;transform:scaleY(1.16);transform-origin:0 2px;color:#1c1c1c">Primary</div>
<div class="t k" style="left:14px;top:259.9px;font-size:9.8px;letter-spacing:-0.5px;transform:scaleY(1.07);transform-origin:0 2px;color:#1a1a1a">11</div>
<div class="t k" style="left:34.3px;top:258.1px;font-size:9.8px;letter-spacing:-0.25px;transform:scaleY(1.16);transform-origin:0 2px;color:#1c1c1c">11.12</div>
<div class="t k" style="left:74.0px;top:258.1px;font-size:9.8px;letter-spacing:-0.25px;transform:scaleY(1.16);transform-origin:0 2px;color:#1c1c1c">1.0</div>
<div class="t k" style="left:111.0px;top:258.1px;font-size:9.8px;letter-spacing:-0.25px;transform:scaleY(1.16);transform-origin:0 2px;color:#1c1c1c">9</div>
<div class="t k" style="left:152.5px;top:258.1px;font-size:9.8px;letter-spacing:-0.25px;transform:scaleY(1.16);transform-origin:0 2px;color:#1c1c1c">4.875</div>
<div class="t k" style="left:204.5px;top:258.1px;font-size:9.8px;letter-spacing:-0.25px;transform:scaleY(1.16);transform-origin:0 2px;color:#1c1c1c">5.000</div>
<div class="t k" style="left:257.5px;top:258.1px;font-size:9.8px;letter-spacing:-0.25px;transform:scaleY(1.16);transform-origin:0 2px;color:#1c1c1c">47.33</div>
<div class="t k" style="left:302.5px;top:258.1px;font-size:9.8px;letter-spacing:-0.25px;transform:scaleY(1.16);transform-origin:0 2px;color:#1c1c1c">47.330</div>
<div class="t k" style="left:397.5px;top:258.1px;font-size:9.8px;letter-spacing:-0.25px;transform:scaleY(1.16);transform-origin:0 2px;color:#1c1c1c">1&quot;</div>
<div class="t k" style="left:433.5px;top:258.1px;font-size:9.8px;letter-spacing:-0.25px;transform:scaleY(1.16);transform-origin:0 2px;color:#1c1c1c">3.5</div>
<div class="t k" style="left:469.4px;top:258.1px;font-size:9.8px;letter-spacing:-0.25px;transform:scaleY(1.16);transform-origin:0 2px;color:#1c1c1c">1.358</div>
<div class="t k" style="left:505.7px;top:258.1px;font-size:9.8px;letter-spacing:-0.25px;transform:scaleY(1.16);transform-origin:0 2px;color:#1c1c1c">5</div>
<div class="t k" style="left:541.6px;top:258.1px;font-size:9.8px;letter-spacing:-0.25px;transform:scaleY(1.16);transform-origin:0 2px;color:#1c1c1c">0.009</div>
<div class="t k" style="left:591.6px;top:258.1px;font-size:9.8px;letter-spacing:-0.25px;transform:scaleY(1.16);transform-origin:0 2px;color:#1c1c1c">0.011</div>
<div class="t k" style="left:643.0px;top:258.1px;font-size:9.8px;letter-spacing:-0.25px;transform:scaleY(1.16);transform-origin:0 2px;color:#1c1c1c">0.021</div>
<div class="t k" style="left:714.7px;top:258.1px;font-size:9.8px;letter-spacing:-0.25px;transform:scaleY(1.16);transform-origin:0 2px;color:#1c1c1c">1</div>
<div class="t k" style="left:763.5px;top:258.1px;font-size:9.8px;letter-spacing:-0.25px;transform:scaleY(1.16);transform-origin:0 2px;color:#1c1c1c">0.350</div>
<div class="t k" style="left:815.4px;top:258.1px;font-size:9.8px;letter-spacing:-0.25px;transform:scaleY(1.16);transform-origin:0 2px;color:#1c1c1c">0.27</div>
<div class="t k" style="left:944.8px;top:258.1px;font-size:9.8px;letter-spacing:-0.25px;transform:scaleY(1.16);transform-origin:0 2px;color:#1c1c1c">Primary</div>
<div class="t k" style="left:14px;top:273.4px;font-size:9.8px;letter-spacing:-0.5px;transform:scaleY(1.07);transform-origin:0 2px;color:#1a1a1a">12</div>
<div class="t k" style="left:34.3px;top:271.6px;font-size:9.8px;letter-spacing:-0.25px;transform:scaleY(1.16);transform-origin:0 2px;color:#1c1c1c">11.13</div>
<div class="t k" style="left:74.0px;top:271.6px;font-size:9.8px;letter-spacing:-0.25px;transform:scaleY(1.16);transform-origin:0 2px;color:#1c1c1c">2.6</div>
<div class="t k" style="left:257.5px;top:271.6px;font-size:9.8px;letter-spacing:-0.25px;transform:scaleY(1.16);transform-origin:0 2px;color:#1c1c1c">94.66</div>
<div class="t k" style="left:302.5px;top:271.6px;font-size:9.8px;letter-spacing:-0.25px;transform:scaleY(1.16);transform-origin:0 2px;color:#1c1c1c">94.660</div>
<div class="t k" style="left:397.5px;top:271.6px;font-size:9.8px;letter-spacing:-0.25px;transform:scaleY(1.16);transform-origin:0 2px;color:#1c1c1c">1&quot;</div>
<div class="t k" style="left:433.5px;top:271.6px;font-size:9.8px;letter-spacing:-0.25px;transform:scaleY(1.16);transform-origin:0 2px;color:#1c1c1c">3.5</div>
<div class="t k" style="left:469.4px;top:271.6px;font-size:9.8px;letter-spacing:-0.25px;transform:scaleY(1.16);transform-origin:0 2px;color:#1c1c1c">2.715</div>
<div class="t k" style="left:505.7px;top:271.6px;font-size:9.8px;letter-spacing:-0.25px;transform:scaleY(1.16);transform-origin:0 2px;color:#1c1c1c">8</div>
<div class="t k" style="left:541.6px;top:271.6px;font-size:9.8px;letter-spacing:-0.25px;transform:scaleY(1.16);transform-origin:0 2px;color:#1c1c1c">0.068</div>
<div class="t k" style="left:591.6px;top:271.6px;font-size:9.8px;letter-spacing:-0.25px;transform:scaleY(1.16);transform-origin:0 2px;color:#1c1c1c">0.105</div>
<div class="t k" style="left:643.0px;top:271.6px;font-size:9.8px;letter-spacing:-0.25px;transform:scaleY(1.16);transform-origin:0 2px;color:#1c1c1c">0.173</div>
<div class="t k" style="left:944.8px;top:271.6px;font-size:9.8px;letter-spacing:-0.25px;transform:scaleY(1.16);transform-origin:0 2px;color:#1c1c1c">Primary</div>
<div class="t k" style="left:14px;top:287.0px;font-size:9.8px;letter-spacing:-0.5px;transform:scaleY(1.07);transform-origin:0 2px;color:#1a1a1a">13</div>
<div class="t k" style="left:34.3px;top:285.2px;font-size:9.8px;letter-spacing:-0.25px;transform:scaleY(1.16);transform-origin:0 2px;color:#1c1c1c">13.14</div>
<div class="t k" style="left:74.0px;top:285.2px;font-size:9.8px;letter-spacing:-0.25px;transform:scaleY(1.16);transform-origin:0 2px;color:#1c1c1c">1.0</div>
<div class="t k" style="left:111.0px;top:285.2px;font-size:9.8px;letter-spacing:-0.25px;transform:scaleY(1.16);transform-origin:0 2px;color:#1c1c1c">9</div>
<div class="t k" style="left:152.5px;top:285.2px;font-size:9.8px;letter-spacing:-0.25px;transform:scaleY(1.16);transform-origin:0 2px;color:#1c1c1c">4.875</div>
<div class="t k" style="left:204.5px;top:285.2px;font-size:9.8px;letter-spacing:-0.25px;transform:scaleY(1.16);transform-origin:0 2px;color:#1c1c1c">5.000</div>
<div class="t k" style="left:257.5px;top:285.2px;font-size:9.8px;letter-spacing:-0.25px;transform:scaleY(1.16);transform-origin:0 2px;color:#1c1c1c">47.33</div>
<div class="t k" style="left:302.5px;top:285.2px;font-size:9.8px;letter-spacing:-0.25px;transform:scaleY(1.16);transform-origin:0 2px;color:#1c1c1c">47.330</div>
<div class="t k" style="left:397.5px;top:285.2px;font-size:9.8px;letter-spacing:-0.25px;transform:scaleY(1.16);transform-origin:0 2px;color:#1c1c1c">1&quot;</div>
<div class="t k" style="left:433.5px;top:285.2px;font-size:9.8px;letter-spacing:-0.25px;transform:scaleY(1.16);transform-origin:0 2px;color:#1c1c1c">3.5</div>
<div class="t k" style="left:469.4px;top:285.2px;font-size:9.8px;letter-spacing:-0.25px;transform:scaleY(1.16);transform-origin:0 2px;color:#1c1c1c">1.358</div>
<div class="t k" style="left:505.7px;top:285.2px;font-size:9.8px;letter-spacing:-0.25px;transform:scaleY(1.16);transform-origin:0 2px;color:#1c1c1c">5</div>
<div class="t k" style="left:541.6px;top:285.2px;font-size:9.8px;letter-spacing:-0.25px;transform:scaleY(1.16);transform-origin:0 2px;color:#1c1c1c">0.009</div>
<div class="t k" style="left:591.6px;top:285.2px;font-size:9.8px;letter-spacing:-0.25px;transform:scaleY(1.16);transform-origin:0 2px;color:#1c1c1c">0.011</div>
<div class="t k" style="left:643.0px;top:285.2px;font-size:9.8px;letter-spacing:-0.25px;transform:scaleY(1.16);transform-origin:0 2px;color:#1c1c1c">0.021</div>
<div class="t k" style="left:714.7px;top:285.2px;font-size:9.8px;letter-spacing:-0.25px;transform:scaleY(1.16);transform-origin:0 2px;color:#1c1c1c">1</div>
<div class="t k" style="left:763.5px;top:285.2px;font-size:9.8px;letter-spacing:-0.25px;transform:scaleY(1.16);transform-origin:0 2px;color:#1c1c1c">0.350</div>
<div class="t k" style="left:815.4px;top:285.2px;font-size:9.8px;letter-spacing:-0.25px;transform:scaleY(1.16);transform-origin:0 2px;color:#1c1c1c">0.27</div>
<div class="t k" style="left:944.8px;top:285.2px;font-size:9.8px;letter-spacing:-0.25px;transform:scaleY(1.16);transform-origin:0 2px;color:#1c1c1c">Primary</div>
<div class="t k" style="left:14px;top:300.5px;font-size:9.8px;letter-spacing:-0.5px;transform:scaleY(1.07);transform-origin:0 2px;color:#1a1a1a">14</div>
<div class="t k" style="left:34.3px;top:298.7px;font-size:9.8px;letter-spacing:-0.25px;transform:scaleY(1.16);transform-origin:0 2px;color:#1c1c1c">13.15</div>
<div class="t k" style="left:74.0px;top:298.7px;font-size:9.8px;letter-spacing:-0.25px;transform:scaleY(1.16);transform-origin:0 2px;color:#1c1c1c">1.0</div>
<div class="t k" style="left:111.0px;top:298.7px;font-size:9.8px;letter-spacing:-0.25px;transform:scaleY(1.16);transform-origin:0 2px;color:#1c1c1c">9</div>
<div class="t k" style="left:152.5px;top:298.7px;font-size:9.8px;letter-spacing:-0.25px;transform:scaleY(1.16);transform-origin:0 2px;color:#1c1c1c">4.875</div>
<div class="t k" style="left:204.5px;top:298.7px;font-size:9.8px;letter-spacing:-0.25px;transform:scaleY(1.16);transform-origin:0 2px;color:#1c1c1c">5.000</div>
<div class="t k" style="left:257.5px;top:298.7px;font-size:9.8px;letter-spacing:-0.25px;transform:scaleY(1.16);transform-origin:0 2px;color:#1c1c1c">47.33</div>
<div class="t k" style="left:302.5px;top:298.7px;font-size:9.8px;letter-spacing:-0.25px;transform:scaleY(1.16);transform-origin:0 2px;color:#1c1c1c">47.330</div>
<div class="t k" style="left:397.5px;top:298.7px;font-size:9.8px;letter-spacing:-0.25px;transform:scaleY(1.16);transform-origin:0 2px;color:#1c1c1c">1&quot;</div>
<div class="t k" style="left:433.5px;top:298.7px;font-size:9.8px;letter-spacing:-0.25px;transform:scaleY(1.16);transform-origin:0 2px;color:#1c1c1c">3.5</div>
<div class="t k" style="left:469.4px;top:298.7px;font-size:9.8px;letter-spacing:-0.25px;transform:scaleY(1.16);transform-origin:0 2px;color:#1c1c1c">1.358</div>
<div class="t k" style="left:505.7px;top:298.7px;font-size:9.8px;letter-spacing:-0.25px;transform:scaleY(1.16);transform-origin:0 2px;color:#1c1c1c">5</div>
<div class="t k" style="left:541.6px;top:298.7px;font-size:9.8px;letter-spacing:-0.25px;transform:scaleY(1.16);transform-origin:0 2px;color:#1c1c1c">0.009</div>
<div class="t k" style="left:591.6px;top:298.7px;font-size:9.8px;letter-spacing:-0.25px;transform:scaleY(1.16);transform-origin:0 2px;color:#1c1c1c">0.011</div>
<div class="t k" style="left:643.0px;top:298.7px;font-size:9.8px;letter-spacing:-0.25px;transform:scaleY(1.16);transform-origin:0 2px;color:#1c1c1c">0.021</div>
<div class="t k" style="left:714.7px;top:298.7px;font-size:9.8px;letter-spacing:-0.25px;transform:scaleY(1.16);transform-origin:0 2px;color:#1c1c1c">1</div>
<div class="t k" style="left:763.5px;top:298.7px;font-size:9.8px;letter-spacing:-0.25px;transform:scaleY(1.16);transform-origin:0 2px;color:#1c1c1c">0.350</div>
<div class="t k" style="left:815.4px;top:298.7px;font-size:9.8px;letter-spacing:-0.25px;transform:scaleY(1.16);transform-origin:0 2px;color:#1c1c1c">0.27</div>
<div class="t k" style="left:944.8px;top:298.7px;font-size:9.8px;letter-spacing:-0.25px;transform:scaleY(1.16);transform-origin:0 2px;color:#1c1c1c">Primary</div>
<div class="t k" style="left:14px;top:314.0px;font-size:9.8px;letter-spacing:-0.5px;transform:scaleY(1.07);transform-origin:0 2px;color:#1a1a1a">15</div>
<div class="t k" style="left:34.3px;top:312.2px;font-size:9.8px;letter-spacing:-0.25px;transform:scaleY(1.16);transform-origin:0 2px;color:#1c1c1c">11.16</div>
<div class="t k" style="left:74.0px;top:312.2px;font-size:9.8px;letter-spacing:-0.25px;transform:scaleY(1.16);transform-origin:0 2px;color:#1c1c1c">1.0</div>
<div class="t k" style="left:111.0px;top:312.2px;font-size:9.8px;letter-spacing:-0.25px;transform:scaleY(1.16);transform-origin:0 2px;color:#1c1c1c">9</div>
<div class="t k" style="left:152.5px;top:312.2px;font-size:9.8px;letter-spacing:-0.25px;transform:scaleY(1.16);transform-origin:0 2px;color:#1c1c1c">4.875</div>
<div class="t k" style="left:204.5px;top:312.2px;font-size:9.8px;letter-spacing:-0.25px;transform:scaleY(1.16);transform-origin:0 2px;color:#1c1c1c">5.000</div>
<div class="t k" style="left:257.5px;top:312.2px;font-size:9.8px;letter-spacing:-0.25px;transform:scaleY(1.16);transform-origin:0 2px;color:#1c1c1c">47.33</div>
<div class="t k" style="left:302.5px;top:312.2px;font-size:9.8px;letter-spacing:-0.25px;transform:scaleY(1.16);transform-origin:0 2px;color:#1c1c1c">47.330</div>
<div class="t k" style="left:397.5px;top:312.2px;font-size:9.8px;letter-spacing:-0.25px;transform:scaleY(1.16);transform-origin:0 2px;color:#1c1c1c">1&quot;</div>
<div class="t k" style="left:433.5px;top:312.2px;font-size:9.8px;letter-spacing:-0.25px;transform:scaleY(1.16);transform-origin:0 2px;color:#1c1c1c">3.5</div>
<div class="t k" style="left:469.4px;top:312.2px;font-size:9.8px;letter-spacing:-0.25px;transform:scaleY(1.16);transform-origin:0 2px;color:#1c1c1c">1.358</div>
<div class="t k" style="left:505.7px;top:312.2px;font-size:9.8px;letter-spacing:-0.25px;transform:scaleY(1.16);transform-origin:0 2px;color:#1c1c1c">5</div>
<div class="t k" style="left:541.6px;top:312.2px;font-size:9.8px;letter-spacing:-0.25px;transform:scaleY(1.16);transform-origin:0 2px;color:#1c1c1c">0.009</div>
<div class="t k" style="left:591.6px;top:312.2px;font-size:9.8px;letter-spacing:-0.25px;transform:scaleY(1.16);transform-origin:0 2px;color:#1c1c1c">0.011</div>
<div class="t k" style="left:643.0px;top:312.2px;font-size:9.8px;letter-spacing:-0.25px;transform:scaleY(1.16);transform-origin:0 2px;color:#1c1c1c">0.021</div>
<div class="t k" style="left:714.7px;top:312.2px;font-size:9.8px;letter-spacing:-0.25px;transform:scaleY(1.16);transform-origin:0 2px;color:#1c1c1c">1</div>
<div class="t k" style="left:763.5px;top:312.2px;font-size:9.8px;letter-spacing:-0.25px;transform:scaleY(1.16);transform-origin:0 2px;color:#1c1c1c">0.350</div>
<div class="t k" style="left:815.4px;top:312.2px;font-size:9.8px;letter-spacing:-0.25px;transform:scaleY(1.16);transform-origin:0 2px;color:#1c1c1c">0.27</div>
<div class="t k" style="left:944.8px;top:312.2px;font-size:9.8px;letter-spacing:-0.25px;transform:scaleY(1.16);transform-origin:0 2px;color:#1c1c1c">Primary</div>
<div class="t k" style="left:14px;top:327.6px;font-size:9.8px;letter-spacing:-0.5px;transform:scaleY(1.07);transform-origin:0 2px;color:#1a1a1a">16</div>
<div class="t k" style="left:34.3px;top:325.8px;font-size:9.8px;letter-spacing:-0.25px;transform:scaleY(1.16);transform-origin:0 2px;color:#1c1c1c">3.17</div>
<div class="t k" style="left:74.0px;top:325.8px;font-size:9.8px;letter-spacing:-0.25px;transform:scaleY(1.16);transform-origin:0 2px;color:#1c1c1c">1.5</div>
<div class="t k" style="left:257.5px;top:325.8px;font-size:9.8px;letter-spacing:-0.25px;transform:scaleY(1.16);transform-origin:0 2px;color:#1c1c1c">189.31</div>
<div class="t k" style="left:302.5px;top:325.8px;font-size:9.8px;letter-spacing:-0.25px;transform:scaleY(1.16);transform-origin:0 2px;color:#1c1c1c">189.310</div>
<div class="t k" style="left:397.5px;top:325.8px;font-size:9.8px;letter-spacing:-0.25px;transform:scaleY(1.16);transform-origin:0 2px;color:#1c1c1c">1.25&quot;</div>
<div class="t k" style="left:433.5px;top:325.8px;font-size:9.8px;letter-spacing:-0.25px;transform:scaleY(1.16);transform-origin:0 2px;color:#1c1c1c">3.5</div>
<div class="t k" style="left:469.4px;top:325.8px;font-size:9.8px;letter-spacing:-0.25px;transform:scaleY(1.16);transform-origin:0 2px;color:#1c1c1c">3.117</div>
<div class="t k" style="left:505.7px;top:325.8px;font-size:9.8px;letter-spacing:-0.25px;transform:scaleY(1.16);transform-origin:0 2px;color:#1c1c1c">11</div>
<div class="t k" style="left:541.6px;top:325.8px;font-size:9.8px;letter-spacing:-0.25px;transform:scaleY(1.16);transform-origin:0 2px;color:#1c1c1c">0.084</div>
<div class="t k" style="left:591.6px;top:325.8px;font-size:9.8px;letter-spacing:-0.25px;transform:scaleY(1.16);transform-origin:0 2px;color:#1c1c1c">0.056</div>
<div class="t k" style="left:643.0px;top:325.8px;font-size:9.8px;letter-spacing:-0.25px;transform:scaleY(1.16);transform-origin:0 2px;color:#1c1c1c">0.141</div>
<div class="t k" style="left:944.8px;top:325.8px;font-size:9.8px;letter-spacing:-0.25px;transform:scaleY(1.16);transform-origin:0 2px;color:#1c1c1c">Primary</div>
<div class="t k" style="left:14px;top:341.1px;font-size:9.8px;letter-spacing:-0.5px;transform:scaleY(1.07);transform-origin:0 2px;color:#1a1a1a">17</div>
<div class="t k" style="left:34.3px;top:339.3px;font-size:9.8px;letter-spacing:-0.25px;transform:scaleY(1.16);transform-origin:0 2px;color:#1c1c1c">17.18</div>
<div class="t k" style="left:74.0px;top:339.3px;font-size:9.8px;letter-spacing:-0.25px;transform:scaleY(1.16);transform-origin:0 2px;color:#1c1c1c">1.1</div>
<div class="t k" style="left:111.0px;top:339.3px;font-size:9.8px;letter-spacing:-0.25px;transform:scaleY(1.16);transform-origin:0 2px;color:#1c1c1c">9</div>
<div class="t k" style="left:152.5px;top:339.3px;font-size:9.8px;letter-spacing:-0.25px;transform:scaleY(1.16);transform-origin:0 2px;color:#1c1c1c">5.135</div>
<div class="t k" style="left:204.5px;top:339.3px;font-size:9.8px;letter-spacing:-0.25px;transform:scaleY(1.16);transform-origin:0 2px;color:#1c1c1c">5.000</div>
<div class="t k" style="left:257.5px;top:339.3px;font-size:9.8px;letter-spacing:-0.25px;transform:scaleY(1.16);transform-origin:0 2px;color:#1c1c1c">47.33</div>
<div class="t k" style="left:302.5px;top:339.3px;font-size:9.8px;letter-spacing:-0.25px;transform:scaleY(1.16);transform-origin:0 2px;color:#1c1c1c">47.330</div>
<div class="t k" style="left:397.5px;top:339.3px;font-size:9.8px;letter-spacing:-0.25px;transform:scaleY(1.16);transform-origin:0 2px;color:#1c1c1c">1&quot;</div>
<div class="t k" style="left:433.5px;top:339.3px;font-size:9.8px;letter-spacing:-0.25px;transform:scaleY(1.16);transform-origin:0 2px;color:#1c1c1c">3.5</div>
<div class="t k" style="left:469.4px;top:339.3px;font-size:9.8px;letter-spacing:-0.25px;transform:scaleY(1.16);transform-origin:0 2px;color:#1c1c1c">1.358</div>
<div class="t k" style="left:505.7px;top:339.3px;font-size:9.8px;letter-spacing:-0.25px;transform:scaleY(1.16);transform-origin:0 2px;color:#1c1c1c">5</div>
<div class="t k" style="left:541.6px;top:339.3px;font-size:9.8px;letter-spacing:-0.25px;transform:scaleY(1.16);transform-origin:0 2px;color:#1c1c1c">0.009</div>
<div class="t k" style="left:591.6px;top:339.3px;font-size:9.8px;letter-spacing:-0.25px;transform:scaleY(1.16);transform-origin:0 2px;color:#1c1c1c">0.012</div>
<div class="t k" style="left:643.0px;top:339.3px;font-size:9.8px;letter-spacing:-0.25px;transform:scaleY(1.16);transform-origin:0 2px;color:#1c1c1c">0.022</div>
<div class="t k" style="left:714.7px;top:339.3px;font-size:9.8px;letter-spacing:-0.25px;transform:scaleY(1.16);transform-origin:0 2px;color:#1c1c1c">3</div>
<div class="t k" style="left:763.5px;top:339.3px;font-size:9.8px;letter-spacing:-0.25px;transform:scaleY(1.16);transform-origin:0 2px;color:#1c1c1c">0.350</div>
<div class="t k" style="left:815.4px;top:339.3px;font-size:9.8px;letter-spacing:-0.25px;transform:scaleY(1.16);transform-origin:0 2px;color:#1c1c1c">0.27</div>
<div class="t k" style="left:944.8px;top:339.3px;font-size:9.8px;letter-spacing:-0.25px;transform:scaleY(1.16);transform-origin:0 2px;color:#1c1c1c">Primary</div>
<div class="t k" style="left:14px;top:354.6px;font-size:9.8px;letter-spacing:-0.5px;transform:scaleY(1.07);transform-origin:0 2px;color:#1a1a1a">18</div>
<div class="t k" style="left:34.3px;top:352.8px;font-size:9.8px;letter-spacing:-0.25px;transform:scaleY(1.16);transform-origin:0 2px;color:#1c1c1c">17.19</div>
<div class="t k" style="left:74.0px;top:352.8px;font-size:9.8px;letter-spacing:-0.25px;transform:scaleY(1.16);transform-origin:0 2px;color:#1c1c1c">1.1</div>
<div class="t k" style="left:111.0px;top:352.8px;font-size:9.8px;letter-spacing:-0.25px;transform:scaleY(1.16);transform-origin:0 2px;color:#1c1c1c">9</div>
<div class="t k" style="left:152.5px;top:352.8px;font-size:9.8px;letter-spacing:-0.25px;transform:scaleY(1.16);transform-origin:0 2px;color:#1c1c1c">5.135</div>
<div class="t k" style="left:204.5px;top:352.8px;font-size:9.8px;letter-spacing:-0.25px;transform:scaleY(1.16);transform-origin:0 2px;color:#1c1c1c">5.000</div>
<div class="t k" style="left:257.5px;top:352.8px;font-size:9.8px;letter-spacing:-0.25px;transform:scaleY(1.16);transform-origin:0 2px;color:#1c1c1c">47.33</div>
<div class="t k" style="left:302.5px;top:352.8px;font-size:9.8px;letter-spacing:-0.25px;transform:scaleY(1.16);transform-origin:0 2px;color:#1c1c1c">47.330</div>
<div class="t k" style="left:397.5px;top:352.8px;font-size:9.8px;letter-spacing:-0.25px;transform:scaleY(1.16);transform-origin:0 2px;color:#1c1c1c">1&quot;</div>
<div class="t k" style="left:433.5px;top:352.8px;font-size:9.8px;letter-spacing:-0.25px;transform:scaleY(1.16);transform-origin:0 2px;color:#1c1c1c">3.5</div>
<div class="t k" style="left:469.4px;top:352.8px;font-size:9.8px;letter-spacing:-0.25px;transform:scaleY(1.16);transform-origin:0 2px;color:#1c1c1c">1.358</div>
<div class="t k" style="left:505.7px;top:352.8px;font-size:9.8px;letter-spacing:-0.25px;transform:scaleY(1.16);transform-origin:0 2px;color:#1c1c1c">5</div>
<div class="t k" style="left:541.6px;top:352.8px;font-size:9.8px;letter-spacing:-0.25px;transform:scaleY(1.16);transform-origin:0 2px;color:#1c1c1c">0.009</div>
<div class="t k" style="left:591.6px;top:352.8px;font-size:9.8px;letter-spacing:-0.25px;transform:scaleY(1.16);transform-origin:0 2px;color:#1c1c1c">0.012</div>
<div class="t k" style="left:643.0px;top:352.8px;font-size:9.8px;letter-spacing:-0.25px;transform:scaleY(1.16);transform-origin:0 2px;color:#1c1c1c">0.022</div>
<div class="t k" style="left:714.7px;top:352.8px;font-size:9.8px;letter-spacing:-0.25px;transform:scaleY(1.16);transform-origin:0 2px;color:#1c1c1c">3</div>
<div class="t k" style="left:763.5px;top:352.8px;font-size:9.8px;letter-spacing:-0.25px;transform:scaleY(1.16);transform-origin:0 2px;color:#1c1c1c">0.350</div>
<div class="t k" style="left:815.4px;top:352.8px;font-size:9.8px;letter-spacing:-0.25px;transform:scaleY(1.16);transform-origin:0 2px;color:#1c1c1c">0.27</div>
<div class="t k" style="left:944.8px;top:352.8px;font-size:9.8px;letter-spacing:-0.25px;transform:scaleY(1.16);transform-origin:0 2px;color:#1c1c1c">Primary</div>
<div class="t k" style="left:14px;top:368.1px;font-size:9.8px;letter-spacing:-0.5px;transform:scaleY(1.07);transform-origin:0 2px;color:#1a1a1a">19</div>
<div class="t k" style="left:34.3px;top:366.3px;font-size:9.8px;letter-spacing:-0.25px;transform:scaleY(1.16);transform-origin:0 2px;color:#1c1c1c">17.20</div>
<div class="t k" style="left:74.0px;top:366.3px;font-size:9.8px;letter-spacing:-0.25px;transform:scaleY(1.16);transform-origin:0 2px;color:#1c1c1c">2.6</div>
<div class="t k" style="left:257.5px;top:366.3px;font-size:9.8px;letter-spacing:-0.25px;transform:scaleY(1.16);transform-origin:0 2px;color:#1c1c1c">94.66</div>
<div class="t k" style="left:302.5px;top:366.3px;font-size:9.8px;letter-spacing:-0.25px;transform:scaleY(1.16);transform-origin:0 2px;color:#1c1c1c">94.660</div>
<div class="t k" style="left:397.5px;top:366.3px;font-size:9.8px;letter-spacing:-0.25px;transform:scaleY(1.16);transform-origin:0 2px;color:#1c1c1c">1&quot;</div>
<div class="t k" style="left:433.5px;top:366.3px;font-size:9.8px;letter-spacing:-0.25px;transform:scaleY(1.16);transform-origin:0 2px;color:#1c1c1c">3.5</div>
<div class="t k" style="left:469.4px;top:366.3px;font-size:9.8px;letter-spacing:-0.25px;transform:scaleY(1.16);transform-origin:0 2px;color:#1c1c1c">2.715</div>
<div class="t k" style="left:505.7px;top:366.3px;font-size:9.8px;letter-spacing:-0.25px;transform:scaleY(1.16);transform-origin:0 2px;color:#1c1c1c">8</div>
<div class="t k" style="left:541.6px;top:366.3px;font-size:9.8px;letter-spacing:-0.25px;transform:scaleY(1.16);transform-origin:0 2px;color:#1c1c1c">0.068</div>
<div class="t k" style="left:591.6px;top:366.3px;font-size:9.8px;letter-spacing:-0.25px;transform:scaleY(1.16);transform-origin:0 2px;color:#1c1c1c">0.105</div>
<div class="t k" style="left:643.0px;top:366.3px;font-size:9.8px;letter-spacing:-0.25px;transform:scaleY(1.16);transform-origin:0 2px;color:#1c1c1c">0.173</div>
<div class="t k" style="left:944.8px;top:366.3px;font-size:9.8px;letter-spacing:-0.25px;transform:scaleY(1.16);transform-origin:0 2px;color:#1c1c1c">Primary</div>
<div class="t k" style="left:14px;top:381.7px;font-size:9.8px;letter-spacing:-0.5px;transform:scaleY(1.07);transform-origin:0 2px;color:#1a1a1a">20</div>
<div class="t k" style="left:34.3px;top:379.9px;font-size:9.8px;letter-spacing:-0.25px;transform:scaleY(1.16);transform-origin:0 2px;color:#1c1c1c">20.21</div>
<div class="t k" style="left:74.0px;top:379.9px;font-size:9.8px;letter-spacing:-0.25px;transform:scaleY(1.16);transform-origin:0 2px;color:#1c1c1c">1.1</div>
<div class="t k" style="left:111.0px;top:379.9px;font-size:9.8px;letter-spacing:-0.25px;transform:scaleY(1.16);transform-origin:0 2px;color:#1c1c1c">9</div>
<div class="t k" style="left:152.5px;top:379.9px;font-size:9.8px;letter-spacing:-0.25px;transform:scaleY(1.16);transform-origin:0 2px;color:#1c1c1c">5.135</div>
<div class="t k" style="left:204.5px;top:379.9px;font-size:9.8px;letter-spacing:-0.25px;transform:scaleY(1.16);transform-origin:0 2px;color:#1c1c1c">5.000</div>
<div class="t k" style="left:257.5px;top:379.9px;font-size:9.8px;letter-spacing:-0.25px;transform:scaleY(1.16);transform-origin:0 2px;color:#1c1c1c">47.33</div>
<div class="t k" style="left:302.5px;top:379.9px;font-size:9.8px;letter-spacing:-0.25px;transform:scaleY(1.16);transform-origin:0 2px;color:#1c1c1c">47.330</div>
<div class="t k" style="left:397.5px;top:379.9px;font-size:9.8px;letter-spacing:-0.25px;transform:scaleY(1.16);transform-origin:0 2px;color:#1c1c1c">1&quot;</div>
<div class="t k" style="left:433.5px;top:379.9px;font-size:9.8px;letter-spacing:-0.25px;transform:scaleY(1.16);transform-origin:0 2px;color:#1c1c1c">3.5</div>
<div class="t k" style="left:469.4px;top:379.9px;font-size:9.8px;letter-spacing:-0.25px;transform:scaleY(1.16);transform-origin:0 2px;color:#1c1c1c">1.358</div>
<div class="t k" style="left:505.7px;top:379.9px;font-size:9.8px;letter-spacing:-0.25px;transform:scaleY(1.16);transform-origin:0 2px;color:#1c1c1c">5</div>
<div class="t k" style="left:541.6px;top:379.9px;font-size:9.8px;letter-spacing:-0.25px;transform:scaleY(1.16);transform-origin:0 2px;color:#1c1c1c">0.009</div>
<div class="t k" style="left:591.6px;top:379.9px;font-size:9.8px;letter-spacing:-0.25px;transform:scaleY(1.16);transform-origin:0 2px;color:#1c1c1c">0.012</div>
<div class="t k" style="left:643.0px;top:379.9px;font-size:9.8px;letter-spacing:-0.25px;transform:scaleY(1.16);transform-origin:0 2px;color:#1c1c1c">0.022</div>
<div class="t k" style="left:714.7px;top:379.9px;font-size:9.8px;letter-spacing:-0.25px;transform:scaleY(1.16);transform-origin:0 2px;color:#1c1c1c">3</div>
<div class="t k" style="left:763.5px;top:379.9px;font-size:9.8px;letter-spacing:-0.25px;transform:scaleY(1.16);transform-origin:0 2px;color:#1c1c1c">0.350</div>
<div class="t k" style="left:815.4px;top:379.9px;font-size:9.8px;letter-spacing:-0.25px;transform:scaleY(1.16);transform-origin:0 2px;color:#1c1c1c">0.27</div>
<div class="t k" style="left:944.8px;top:379.9px;font-size:9.8px;letter-spacing:-0.25px;transform:scaleY(1.16);transform-origin:0 2px;color:#1c1c1c">Primary</div>
<div class="t k" style="left:14px;top:395.2px;font-size:9.8px;letter-spacing:-0.5px;transform:scaleY(1.07);transform-origin:0 2px;color:#1a1a1a">21</div>
<div class="t k" style="left:34.3px;top:393.4px;font-size:9.8px;letter-spacing:-0.25px;transform:scaleY(1.16);transform-origin:0 2px;color:#1c1c1c">20.22</div>
<div class="t k" style="left:74.0px;top:393.4px;font-size:9.8px;letter-spacing:-0.25px;transform:scaleY(1.16);transform-origin:0 2px;color:#1c1c1c">1.1</div>
<div class="t k" style="left:111.0px;top:393.4px;font-size:9.8px;letter-spacing:-0.25px;transform:scaleY(1.16);transform-origin:0 2px;color:#1c1c1c">9</div>
<div class="t k" style="left:152.5px;top:393.4px;font-size:9.8px;letter-spacing:-0.25px;transform:scaleY(1.16);transform-origin:0 2px;color:#1c1c1c">5.135</div>
<div class="t k" style="left:204.5px;top:393.4px;font-size:9.8px;letter-spacing:-0.25px;transform:scaleY(1.16);transform-origin:0 2px;color:#1c1c1c">5.000</div>
<div class="t k" style="left:257.5px;top:393.4px;font-size:9.8px;letter-spacing:-0.25px;transform:scaleY(1.16);transform-origin:0 2px;color:#1c1c1c">47.33</div>
<div class="t k" style="left:302.5px;top:393.4px;font-size:9.8px;letter-spacing:-0.25px;transform:scaleY(1.16);transform-origin:0 2px;color:#1c1c1c">47.330</div>
<div class="t k" style="left:397.5px;top:393.4px;font-size:9.8px;letter-spacing:-0.25px;transform:scaleY(1.16);transform-origin:0 2px;color:#1c1c1c">1&quot;</div>
<div class="t k" style="left:433.5px;top:393.4px;font-size:9.8px;letter-spacing:-0.25px;transform:scaleY(1.16);transform-origin:0 2px;color:#1c1c1c">3.5</div>
<div class="t k" style="left:469.4px;top:393.4px;font-size:9.8px;letter-spacing:-0.25px;transform:scaleY(1.16);transform-origin:0 2px;color:#1c1c1c">1.358</div>
<div class="t k" style="left:505.7px;top:393.4px;font-size:9.8px;letter-spacing:-0.25px;transform:scaleY(1.16);transform-origin:0 2px;color:#1c1c1c">5</div>
<div class="t k" style="left:541.6px;top:393.4px;font-size:9.8px;letter-spacing:-0.25px;transform:scaleY(1.16);transform-origin:0 2px;color:#1c1c1c">0.009</div>
<div class="t k" style="left:591.6px;top:393.4px;font-size:9.8px;letter-spacing:-0.25px;transform:scaleY(1.16);transform-origin:0 2px;color:#1c1c1c">0.012</div>
<div class="t k" style="left:643.0px;top:393.4px;font-size:9.8px;letter-spacing:-0.25px;transform:scaleY(1.16);transform-origin:0 2px;color:#1c1c1c">0.022</div>
<div class="t k" style="left:714.7px;top:393.4px;font-size:9.8px;letter-spacing:-0.25px;transform:scaleY(1.16);transform-origin:0 2px;color:#1c1c1c">3</div>
<div class="t k" style="left:763.5px;top:393.4px;font-size:9.8px;letter-spacing:-0.25px;transform:scaleY(1.16);transform-origin:0 2px;color:#1c1c1c">0.350</div>
<div class="t k" style="left:815.4px;top:393.4px;font-size:9.8px;letter-spacing:-0.25px;transform:scaleY(1.16);transform-origin:0 2px;color:#1c1c1c">0.27</div>
<div class="t k" style="left:944.8px;top:393.4px;font-size:9.8px;letter-spacing:-0.25px;transform:scaleY(1.16);transform-origin:0 2px;color:#1c1c1c">Primary</div>
<div class="t k" style="left:14px;top:408.7px;font-size:9.8px;letter-spacing:-0.5px;transform:scaleY(1.07);transform-origin:0 2px;color:#1a1a1a">22</div>
<div class="t k" style="left:34.3px;top:406.9px;font-size:9.8px;letter-spacing:-0.25px;transform:scaleY(1.16);transform-origin:0 2px;color:#1c1c1c">2.23</div>
<div class="t k" style="left:74.0px;top:406.9px;font-size:9.8px;letter-spacing:-0.25px;transform:scaleY(1.16);transform-origin:0 2px;color:#1c1c1c">2.5</div>
<div class="t k" style="left:257.5px;top:406.9px;font-size:9.8px;letter-spacing:-0.25px;transform:scaleY(1.16);transform-origin:0 2px;color:#1c1c1c">189.31</div>
<div class="t k" style="left:302.5px;top:406.9px;font-size:9.8px;letter-spacing:-0.25px;transform:scaleY(1.16);transform-origin:0 2px;color:#1c1c1c">189.310</div>
<div class="t k" style="left:397.5px;top:406.9px;font-size:9.8px;letter-spacing:-0.25px;transform:scaleY(1.16);transform-origin:0 2px;color:#1c1c1c">1.25&quot;</div>
<div class="t k" style="left:433.5px;top:406.9px;font-size:9.8px;letter-spacing:-0.25px;transform:scaleY(1.16);transform-origin:0 2px;color:#1c1c1c">3.5</div>
<div class="t k" style="left:469.4px;top:406.9px;font-size:9.8px;letter-spacing:-0.25px;transform:scaleY(1.16);transform-origin:0 2px;color:#1c1c1c">3.117</div>
<div class="t k" style="left:505.7px;top:406.9px;font-size:9.8px;letter-spacing:-0.25px;transform:scaleY(1.16);transform-origin:0 2px;color:#1c1c1c">F-3</div>
<div class="t k" style="left:541.6px;top:406.9px;font-size:9.8px;letter-spacing:-0.25px;transform:scaleY(1.16);transform-origin:0 2px;color:#1c1c1c">0.167</div>
<div class="t k" style="left:591.6px;top:406.9px;font-size:9.8px;letter-spacing:-0.25px;transform:scaleY(1.16);transform-origin:0 2px;color:#1c1c1c">0.094</div>
<div class="t k" style="left:643.0px;top:406.9px;font-size:9.8px;letter-spacing:-0.25px;transform:scaleY(1.16);transform-origin:0 2px;color:#1c1c1c">0.261</div>
<div class="t k" style="left:944.8px;top:406.9px;font-size:9.8px;letter-spacing:-0.25px;transform:scaleY(1.16);transform-origin:0 2px;color:#1c1c1c">Primary</div>
<div class="t k" style="left:14px;top:422.3px;font-size:9.8px;letter-spacing:-0.5px;transform:scaleY(1.07);transform-origin:0 2px;color:#1a1a1a">23</div>
<div class="t k" style="left:34.3px;top:420.5px;font-size:9.8px;letter-spacing:-0.25px;transform:scaleY(1.16);transform-origin:0 2px;color:#1c1c1c">23.24</div>
<div class="t k" style="left:74.0px;top:420.5px;font-size:9.8px;letter-spacing:-0.25px;transform:scaleY(1.16);transform-origin:0 2px;color:#1c1c1c">3.0</div>
<div class="t k" style="left:257.5px;top:420.5px;font-size:9.8px;letter-spacing:-0.25px;transform:scaleY(1.16);transform-origin:0 2px;color:#1c1c1c">141.99</div>
<div class="t k" style="left:302.5px;top:420.5px;font-size:9.8px;letter-spacing:-0.25px;transform:scaleY(1.16);transform-origin:0 2px;color:#1c1c1c">141.990</div>
<div class="t k" style="left:397.5px;top:420.5px;font-size:9.8px;letter-spacing:-0.25px;transform:scaleY(1.16);transform-origin:0 2px;color:#1c1c1c">1.25&quot;</div>
<div class="t k" style="left:433.5px;top:420.5px;font-size:9.8px;letter-spacing:-0.25px;transform:scaleY(1.16);transform-origin:0 2px;color:#1c1c1c">3.5</div>
<div class="t k" style="left:469.4px;top:420.5px;font-size:9.8px;letter-spacing:-0.25px;transform:scaleY(1.16);transform-origin:0 2px;color:#1c1c1c">2.338</div>
<div class="t k" style="left:505.7px;top:420.5px;font-size:9.8px;letter-spacing:-0.25px;transform:scaleY(1.16);transform-origin:0 2px;color:#1c1c1c">8</div>
<div class="t k" style="left:541.6px;top:420.5px;font-size:9.8px;letter-spacing:-0.25px;transform:scaleY(1.16);transform-origin:0 2px;color:#1c1c1c">0.050</div>
<div class="t k" style="left:591.6px;top:420.5px;font-size:9.8px;letter-spacing:-0.25px;transform:scaleY(1.16);transform-origin:0 2px;color:#1c1c1c">0.066</div>
<div class="t k" style="left:643.0px;top:420.5px;font-size:9.8px;letter-spacing:-0.25px;transform:scaleY(1.16);transform-origin:0 2px;color:#1c1c1c">0.116</div>
<div class="t k" style="left:944.8px;top:420.5px;font-size:9.8px;letter-spacing:-0.25px;transform:scaleY(1.16);transform-origin:0 2px;color:#1c1c1c">Primary</div>
<div class="t k" style="left:14px;top:435.8px;font-size:9.8px;letter-spacing:-0.5px;transform:scaleY(1.07);transform-origin:0 2px;color:#1a1a1a">24</div>
<div class="t k" style="left:34.3px;top:434.0px;font-size:9.8px;letter-spacing:-0.25px;transform:scaleY(1.16);transform-origin:0 2px;color:#1c1c1c">24.25</div>
<div class="t k" style="left:74.0px;top:434.0px;font-size:9.8px;letter-spacing:-0.25px;transform:scaleY(1.16);transform-origin:0 2px;color:#1c1c1c">3.0</div>
<div class="t k" style="left:257.5px;top:434.0px;font-size:9.8px;letter-spacing:-0.25px;transform:scaleY(1.16);transform-origin:0 2px;color:#1c1c1c">94.66</div>
<div class="t k" style="left:302.5px;top:434.0px;font-size:9.8px;letter-spacing:-0.25px;transform:scaleY(1.16);transform-origin:0 2px;color:#1c1c1c">94.660</div>
<div class="t k" style="left:397.5px;top:434.0px;font-size:9.8px;letter-spacing:-0.25px;transform:scaleY(1.16);transform-origin:0 2px;color:#1c1c1c">1&quot;</div>
<div class="t k" style="left:433.5px;top:434.0px;font-size:9.8px;letter-spacing:-0.25px;transform:scaleY(1.16);transform-origin:0 2px;color:#1c1c1c">3.5</div>
<div class="t k" style="left:469.4px;top:434.0px;font-size:9.8px;letter-spacing:-0.25px;transform:scaleY(1.16);transform-origin:0 2px;color:#1c1c1c">2.715</div>
<div class="t k" style="left:505.7px;top:434.0px;font-size:9.8px;letter-spacing:-0.25px;transform:scaleY(1.16);transform-origin:0 2px;color:#1c1c1c">8</div>
<div class="t k" style="left:541.6px;top:434.0px;font-size:9.8px;letter-spacing:-0.25px;transform:scaleY(1.16);transform-origin:0 2px;color:#1c1c1c">0.068</div>
<div class="t k" style="left:591.6px;top:434.0px;font-size:9.8px;letter-spacing:-0.25px;transform:scaleY(1.16);transform-origin:0 2px;color:#1c1c1c">0.121</div>
<div class="t k" style="left:643.0px;top:434.0px;font-size:9.8px;letter-spacing:-0.25px;transform:scaleY(1.16);transform-origin:0 2px;color:#1c1c1c">0.189</div>
<div class="t k" style="left:944.8px;top:434.0px;font-size:9.8px;letter-spacing:-0.25px;transform:scaleY(1.16);transform-origin:0 2px;color:#1c1c1c">Primary</div>
<div class="t k" style="left:14px;top:449.3px;font-size:9.8px;letter-spacing:-0.5px;transform:scaleY(1.07);transform-origin:0 2px;color:#1a1a1a">25</div>
<div class="t k" style="left:34.3px;top:447.5px;font-size:9.8px;letter-spacing:-0.25px;transform:scaleY(1.16);transform-origin:0 2px;color:#1c1c1c">25.26</div>
<div class="t k" style="left:74.0px;top:447.5px;font-size:9.8px;letter-spacing:-0.25px;transform:scaleY(1.16);transform-origin:0 2px;color:#1c1c1c">3.1</div>
<div class="t k" style="left:111.0px;top:447.5px;font-size:9.8px;letter-spacing:-0.25px;transform:scaleY(1.16);transform-origin:0 2px;color:#1c1c1c">9</div>
<div class="t k" style="left:152.5px;top:447.5px;font-size:9.8px;letter-spacing:-0.25px;transform:scaleY(1.16);transform-origin:0 2px;color:#1c1c1c">7.800</div>
<div class="t k" style="left:204.5px;top:447.5px;font-size:9.8px;letter-spacing:-0.25px;transform:scaleY(1.16);transform-origin:0 2px;color:#1c1c1c">5.000</div>
<div class="t k" style="left:257.5px;top:447.5px;font-size:9.8px;letter-spacing:-0.25px;transform:scaleY(1.16);transform-origin:0 2px;color:#1c1c1c">47.33</div>
<div class="t k" style="left:302.5px;top:447.5px;font-size:9.8px;letter-spacing:-0.25px;transform:scaleY(1.16);transform-origin:0 2px;color:#1c1c1c">47.330</div>
<div class="t k" style="left:397.5px;top:447.5px;font-size:9.8px;letter-spacing:-0.25px;transform:scaleY(1.16);transform-origin:0 2px;color:#1c1c1c">1&quot;</div>
<div class="t k" style="left:433.5px;top:447.5px;font-size:9.8px;letter-spacing:-0.25px;transform:scaleY(1.16);transform-origin:0 2px;color:#1c1c1c">3.5</div>
<div class="t k" style="left:469.4px;top:447.5px;font-size:9.8px;letter-spacing:-0.25px;transform:scaleY(1.16);transform-origin:0 2px;color:#1c1c1c">1.358</div>
<div class="t k" style="left:505.7px;top:447.5px;font-size:9.8px;letter-spacing:-0.25px;transform:scaleY(1.16);transform-origin:0 2px;color:#1c1c1c">F-3</div>
<div class="t k" style="left:541.6px;top:447.5px;font-size:9.8px;letter-spacing:-0.25px;transform:scaleY(1.16);transform-origin:0 2px;color:#1c1c1c">0.019</div>
<div class="t k" style="left:591.6px;top:447.5px;font-size:9.8px;letter-spacing:-0.25px;transform:scaleY(1.16);transform-origin:0 2px;color:#1c1c1c">0.035</div>
<div class="t k" style="left:643.0px;top:447.5px;font-size:9.8px;letter-spacing:-0.25px;transform:scaleY(1.16);transform-origin:0 2px;color:#1c1c1c">0.053</div>
<div class="t k" style="left:714.7px;top:447.5px;font-size:9.8px;letter-spacing:-0.25px;transform:scaleY(1.16);transform-origin:0 2px;color:#1c1c1c">7</div>
<div class="t k" style="left:763.5px;top:447.5px;font-size:9.8px;letter-spacing:-0.25px;transform:scaleY(1.16);transform-origin:0 2px;color:#1c1c1c">0.350</div>
<div class="t k" style="left:815.4px;top:447.5px;font-size:9.8px;letter-spacing:-0.25px;transform:scaleY(1.16);transform-origin:0 2px;color:#1c1c1c">0.27</div>
<div class="t k" style="left:944.8px;top:447.5px;font-size:9.8px;letter-spacing:-0.25px;transform:scaleY(1.16);transform-origin:0 2px;color:#1c1c1c">Primary</div>
<div class="t k" style="left:14px;top:462.9px;font-size:9.8px;letter-spacing:-0.5px;transform:scaleY(1.07);transform-origin:0 2px;color:#1a1a1a">26</div>
<div class="t k" style="left:34.3px;top:461.1px;font-size:9.8px;letter-spacing:-0.25px;transform:scaleY(1.16);transform-origin:0 2px;color:#1c1c1c">25.27</div>
<div class="t k" style="left:74.0px;top:461.1px;font-size:9.8px;letter-spacing:-0.25px;transform:scaleY(1.16);transform-origin:0 2px;color:#1c1c1c">0.1</div>
<div class="t k" style="left:111.0px;top:461.1px;font-size:9.8px;letter-spacing:-0.25px;transform:scaleY(1.16);transform-origin:0 2px;color:#1c1c1c">9</div>
<div class="t k" style="left:152.5px;top:461.1px;font-size:9.8px;letter-spacing:-0.25px;transform:scaleY(1.16);transform-origin:0 2px;color:#1c1c1c">7.800</div>
<div class="t k" style="left:204.5px;top:461.1px;font-size:9.8px;letter-spacing:-0.25px;transform:scaleY(1.16);transform-origin:0 2px;color:#1c1c1c">5.000</div>
<div class="t k" style="left:257.5px;top:461.1px;font-size:9.8px;letter-spacing:-0.25px;transform:scaleY(1.16);transform-origin:0 2px;color:#1c1c1c">47.33</div>
<div class="t k" style="left:302.5px;top:461.1px;font-size:9.8px;letter-spacing:-0.25px;transform:scaleY(1.16);transform-origin:0 2px;color:#1c1c1c">47.330</div>
<div class="t k" style="left:397.5px;top:461.1px;font-size:9.8px;letter-spacing:-0.25px;transform:scaleY(1.16);transform-origin:0 2px;color:#1c1c1c">1&quot;</div>
<div class="t k" style="left:433.5px;top:461.1px;font-size:9.8px;letter-spacing:-0.25px;transform:scaleY(1.16);transform-origin:0 2px;color:#1c1c1c">3.5</div>
<div class="t k" style="left:469.4px;top:461.1px;font-size:9.8px;letter-spacing:-0.25px;transform:scaleY(1.16);transform-origin:0 2px;color:#1c1c1c">1.358</div>
<div class="t k" style="left:505.7px;top:461.1px;font-size:9.8px;letter-spacing:-0.25px;transform:scaleY(1.16);transform-origin:0 2px;color:#1c1c1c">5</div>
<div class="t k" style="left:541.6px;top:461.1px;font-size:9.8px;letter-spacing:-0.25px;transform:scaleY(1.16);transform-origin:0 2px;color:#1c1c1c">0.009</div>
<div class="t k" style="left:591.6px;top:461.1px;font-size:9.8px;letter-spacing:-0.25px;transform:scaleY(1.16);transform-origin:0 2px;color:#1c1c1c">0.001</div>
<div class="t k" style="left:643.0px;top:461.1px;font-size:9.8px;letter-spacing:-0.25px;transform:scaleY(1.16);transform-origin:0 2px;color:#1c1c1c">0.011</div>
<div class="t k" style="left:714.7px;top:461.1px;font-size:9.8px;letter-spacing:-0.25px;transform:scaleY(1.16);transform-origin:0 2px;color:#1c1c1c">7</div>
<div class="t k" style="left:763.5px;top:461.1px;font-size:9.8px;letter-spacing:-0.25px;transform:scaleY(1.16);transform-origin:0 2px;color:#1c1c1c">0.350</div>
<div class="t k" style="left:815.4px;top:461.1px;font-size:9.8px;letter-spacing:-0.25px;transform:scaleY(1.16);transform-origin:0 2px;color:#1c1c1c">0.27</div>
<div class="t k" style="left:944.8px;top:461.1px;font-size:9.8px;letter-spacing:-0.25px;transform:scaleY(1.16);transform-origin:0 2px;color:#1c1c1c">Primary</div>
<div class="a" style="left:12px;top:476px;width:1003px;height:14px;background:#f0f0f0"></div>
<div class="a" style="left:25px;top:477px;width:917px;height:11px;background:#c2c2c2"></div>
<svg class="a" style="left:15px;top:479px" width="6" height="8" viewBox="0 0 6 8"><path d="M4.5 0.8L1.5 4L4.5 7.2" stroke="#222" stroke-width="1.6" fill="none"/></svg>
<svg class="a" style="left:992px;top:478px" width="6" height="8" viewBox="0 0 6 8"><path d="M1.5 0.8L4.5 4L1.5 7.2" stroke="#222" stroke-width="1.6" fill="none"/></svg>
<div class="a" style="left:1002px;top:95px;width:11px;height:12px;background:#c4c4c4"></div>
<svg class="a" style="left:1004px;top:86px" width="8" height="6" viewBox="0 0 8 6"><path d="M0.8 4.5L4 1.5L7.2 4.5" stroke="#222" stroke-width="1.6" fill="none"/></svg>
<svg class="a" style="left:1003px;top:467px" width="8" height="6" viewBox="0 0 8 6"><path d="M0.8 1.5L4 4.5L7.2 1.5" stroke="#222" stroke-width="1.6" fill="none"/></svg>
<div class="t k" style="left:366px;top:4.5px;font-size:9.2px;transform:scaleX(0.876);transform-origin:0 0;color:#1a1a1a">Fire Fighting - [C:\FINE19_FIRE\CALC\FIRE_SAMPLE.BLD] - [Calculation Sheet]</div>
<div class="a" style="left:993px;top:0px;width:27px;height:11px;background:#c8202a"></div>
<div class="t" style="left:1002px;top:0px;font-size:11px;color:#fff">&times;</div>
<div class="a" style="left:982px;top:2px;width:7px;height:6px;border:1px solid #333;border-top-width:2px"></div>
<div class="a" style="left:967px;top:6px;width:5px;height:1px;background:#222"></div>
<div class="a" style="left:22px;top:19px;width:997px;height:14px;background:linear-gradient(90deg,#d4d4e2,#d8d8e6 30%,#e2e2ec 60%,#e4e4ee)"></div>
<div class="a" style="left:6px;top:19px;width:16px;height:14px;background:#e8e8f0"></div>
<svg class="a" style="left:9px;top:1px" width="10" height="13" viewBox="0 0 10 13"><path d="M1.5 4.5Q1.5 3 3 3H5.5Q7 3 7 4.5V12H1.5Z" fill="#b8101a"/><path d="M2.5 5V11" stroke="#f06070" stroke-width="0.8"/><path d="M0 1.5L3 0.5L5 2.5M4 2H7Q8.5 2 8.5 4V7" stroke="#151515" stroke-width="1.4" fill="none"/></svg>
<svg class="a" style="left:11px;top:19px" width="10" height="13" viewBox="0 0 10 13"><path d="M1.5 4.5Q1.5 3 3 3H5.5Q7 3 7 4.5V12H1.5Z" fill="#b8101a"/><path d="M2.5 5V11" stroke="#f06070" stroke-width="0.8"/><path d="M0 1.5L3 0.5L5 2.5M4 2H7Q8.5 2 8.5 4V7" stroke="#151515" stroke-width="1.4" fill="none"/></svg>
<div class="t k" style="left:27px;top:20.8px;font-size:9.6px;transform:scaleX(0.9);transform-origin:0 0;color:#1a1a2a">Files</div>
<div class="t k" style="left:55px;top:20.8px;font-size:9.6px;transform:scaleX(0.9);transform-origin:0 0;color:#1a1a2a">Project Data</div>
<div class="t k" style="left:113px;top:20.8px;font-size:9.6px;transform:scaleX(0.9);transform-origin:0 0;color:#1a1a2a">View</div>
<div class="t k" style="left:142.5px;top:20.8px;font-size:9.6px;transform:scaleX(0.9);transform-origin:0 0;color:#1a1a2a">Calculation Sheet</div>
<div class="t k" style="left:222px;top:20.8px;font-size:9.6px;transform:scaleX(0.9);transform-origin:0 0;color:#1a1a2a">Windows</div>
<div class="t k" style="left:269.5px;top:20.8px;font-size:9.6px;transform:scaleX(0.9);transform-origin:0 0;color:#1a1a2a">Libraries</div>
<div class="t k" style="left:313.5px;top:20.8px;font-size:9.6px;transform:scaleX(0.9);transform-origin:0 0;color:#1a1a2a">Help</div>
<div class="a" style="left:976px;top:19px;width:14px;height:14px;background:linear-gradient(#e4e8ee,#d8dde4);border:1px solid #a8acb6;border-bottom-color:#80848e"></div>
<div class="a" style="left:991px;top:19px;width:14px;height:14px;background:linear-gradient(#e4e8ee,#d8dde4);border:1px solid #a8acb6;border-bottom-color:#80848e"></div>
<div class="a" style="left:1006px;top:19px;width:14px;height:14px;background:linear-gradient(#e4e8ee,#d8dde4);border:1px solid #a8acb6;border-bottom-color:#80848e"></div>
<div class="a" style="left:980px;top:28px;width:6px;height:2px;background:#3a4050"></div>
<svg class="a" style="left:995px;top:23px" width="8" height="7" viewBox="0 0 8 7"><path d="M2.5 1H7V4.5H5.5" fill="none" stroke="#3a4050" stroke-width="1.2"/><rect x="0.7" y="2.8" width="4.3" height="3.5" fill="none" stroke="#3a4050" stroke-width="1.3"/></svg>
<svg class="a" style="left:1009px;top:23px" width="7" height="7" viewBox="0 0 7 7"><path d="M0.8 0.8L6.2 6.2M6.2 0.8L0.8 6.2" stroke="#323a4c" stroke-width="1.5"/></svg>
<div class="a" style="left:6px;top:494px;width:1014px;height:15px;background:linear-gradient(#ced2dc,#b8bcca 40%,#a4a8b8);border:1px solid #8a8e9a;border-bottom-color:#505058"></div>
<div class="a" style="left:51px;top:495px;width:1px;height:13px;background:#e4e6ee"></div>
<div class="a" style="left:52px;top:495px;width:2px;height:13px;background:linear-gradient(90deg,#c4c8d4,#b0b4c2)"></div>
<div class="a" style="left:130px;top:495px;width:1px;height:13px;background:#e4e6ee"></div>
<div class="a" style="left:131px;top:495px;width:2px;height:13px;background:linear-gradient(90deg,#c4c8d4,#b0b4c2)"></div>
<div class="a" style="left:506px;top:495px;width:1px;height:13px;background:#e4e6ee"></div>
<div class="a" style="left:507px;top:495px;width:2px;height:13px;background:linear-gradient(90deg,#c4c8d4,#b0b4c2)"></div>
<svg class="a" style="left:1004px;top:498px" width="12" height="10" viewBox="0 0 12 10"><g fill="#6a6e7a"><rect x="9" y="1" width="2" height="2"/><rect x="6" y="4" width="2" height="2"/><rect x="9" y="4" width="2" height="2"/><rect x="3" y="7" width="2" height="2"/><rect x="6" y="7" width="2" height="2"/><rect x="9" y="7" width="2" height="2"/></g></svg>
<div class="t" style="left:21px;top:497.5px;font-size:9.1px;transform:scaleY(1.1);transform-origin:0 2px;color:#1a1a1a">46: 12</div>
<div class="t" style="left:55px;top:497.5px;font-size:9.1px;transform:scaleY(1.1);transform-origin:0 2px;color:#1a1a1a">View</div>
<div class="t" style="left:134px;top:497.5px;font-size:9.1px;transform:scaleY(1.1);transform-origin:0 2px;color:#1a1a1a">Type of Fittings</div>
<div class="t" style="left:509px;top:497.5px;font-size:9.1px;transform:scaleY(1.1);transform-origin:0 2px;color:#1a1a1a">Ctrl + Enter or F11 .</div>
<div class="a" style="left:9px;top:35px;width:106px;height:20px;background:linear-gradient(#f2f2f6,#e2e2ea);border:1px solid #b9b9c6;border-right:none;border-radius:3px 0 0 3px"></div>
<div class="a" style="left:12px;top:38px;width:2px;height:14px;background:repeating-linear-gradient(#8c8c9c 0 1px,#fafafa 1px 2px,transparent 2px 3px)"></div>
<div class="a" style="left:115px;top:35px;width:8px;height:20px;background:linear-gradient(90deg,#8a8aa4,#6c6c8a 40%,#666684);border-radius:0 3px 3px 0"></div>
<div class="a" style="left:16px;top:37px;width:16px;height:16px;background:linear-gradient(#f8f8fa,#eeeef2);border:1px solid #dedee6;border-radius:2px"></div>
<div class="a" style="left:34px;top:37px;width:16px;height:16px;background:linear-gradient(#f8f8fa,#eeeef2);border:1px solid #dedee6;border-radius:2px"></div>
<div class="a" style="left:52px;top:37px;width:16px;height:16px;background:linear-gradient(#f8f8fa,#eeeef2);border:1px solid #dedee6;border-radius:2px"></div>
<div class="a" style="left:77px;top:37px;width:17px;height:16px;background:linear-gradient(#f8f8fa,#eeeef2);border:1px solid #dedee6;border-radius:2px"></div>
<div class="a" style="left:96px;top:37px;width:17px;height:16px;background:linear-gradient(#f8f8fa,#eeeef2);border:1px solid #dedee6;border-radius:2px"></div>
<div class="a" style="left:72px;top:38px;width:1px;height:14px;background:#a8a8b8"></div>
<div class="a" style="left:73px;top:38px;width:1px;height:14px;background:#fafafc"></div>
<svg class="a" style="left:19px;top:39px" width="10" height="11" viewBox="0 0 10 11"><path d="M0.5 0.5H6.5L9.5 3.5V10.5H0.5Z" fill="#fafafa" stroke="#c8c8d0"/><path d="M6 0.5L9.5 4V10.5H1" fill="none" stroke="#222" stroke-width="1.3"/></svg>
<svg class="a" style="left:36px;top:39px" width="13" height="12" viewBox="0 0 13 12"><path d="M0.5 3H4.5L5.5 4.5H10V11H0.5Z" fill="#c8a030"/><path d="M2 6H12.5L10 11H0.5Z" fill="#f0d050" stroke="#8a6a10" stroke-width="0.8"/><path d="M8 1.5Q10.5 0 12 2.5" stroke="#222" stroke-width="1.5" fill="none"/><path d="M11 1L12.6 3.2L10.3 3.2Z" fill="#222"/></svg>
<svg class="a" style="left:55px;top:40px" width="11" height="11" viewBox="0 0 11 11"><rect x="0" y="0" width="11" height="11" fill="#2a2a80"/><rect x="2" y="1" width="7" height="4" fill="#f0f0f8"/><rect x="3" y="7" width="5" height="4" fill="#8080b8"/><rect x="5" y="8" width="2" height="2" fill="#2a2a80"/></svg>
<svg class="a" style="left:80px;top:39px" width="13" height="12" viewBox="0 0 13 12"><path d="M3 0.5H10L11 4H2Z" fill="#d8e8e0" stroke="#506860" stroke-width="0.8"/><rect x="0.5" y="4" width="12" height="6" rx="1.5" fill="#8aa098" stroke="#3a4a44" stroke-width="0.8"/><rect x="2" y="7" width="6" height="2" fill="#f4f4f4"/><rect x="9" y="5" width="3" height="4" fill="#2a3a34"/></svg>
<svg class="a" style="left:98px;top:39px" width="13" height="12" viewBox="0 0 13 12"><path d="M0.5 0.5H6.5L8.5 2.5V11.5H0.5Z" fill="#f4f4f4" stroke="#888"/><circle cx="6.5" cy="6.5" r="3" fill="#e0e0e0" stroke="#333" stroke-width="1.3"/><path d="M8.5 8.5L12.5 11.5" stroke="#222" stroke-width="2"/><path d="M7 3L9 1.5" stroke="#222" stroke-width="1.2"/></svg>
<div class="a" style="left:125px;top:35px;width:63px;height:20px;background:linear-gradient(#f2f2f6,#e2e2ea);border:1px solid #b9b9c6;border-right:none;border-radius:3px 0 0 3px"></div>
<div class="a" style="left:128px;top:38px;width:2px;height:14px;background:repeating-linear-gradient(#8c8c9c 0 1px,#fafafa 1px 2px,transparent 2px 3px)"></div>
<div class="a" style="left:188px;top:35px;width:8px;height:20px;background:linear-gradient(90deg,#8a8aa4,#6c6c8a 40%,#666684);border-radius:0 3px 3px 0"></div>
<div class="a" style="left:132px;top:37px;width:17px;height:16px;background:linear-gradient(#f8f8fa,#eeeef2);border:1px solid #dedee6;border-radius:2px"></div>
<div class="a" style="left:150px;top:37px;width:17px;height:16px;background:linear-gradient(#f8f8fa,#eeeef2);border:1px solid #dedee6;border-radius:2px"></div>
<div class="a" style="left:168px;top:37px;width:18px;height:16px;background:linear-gradient(#f8f8fa,#eeeef2);border:1px solid #dedee6;border-radius:2px"></div>
<svg class="a" style="left:137px;top:40px" width="8" height="11" viewBox="0 0 8 11"><path d="M1.5 0.5L5 7M6.5 0.5L3 7" stroke="#505868" stroke-width="1.2"/><circle cx="2" cy="8.8" r="1.6" fill="#203080"/><circle cx="6" cy="8.8" r="1.6" fill="#203080"/></svg>
<svg class="a" style="left:152px;top:40px" width="14" height="11" viewBox="0 0 14 11"><path d="M1 0.5H5.5L7.5 2.5V7.5H1Z" fill="#dde4f4" stroke="#8090b0" stroke-width="0.8"/><path d="M5 3.5H10L13 6.5V10.5H5Z" fill="#6878c0" stroke="#404c90" stroke-width="0.8"/></svg>
<svg class="a" style="left:170px;top:40px" width="14" height="11" viewBox="0 0 14 11"><rect x="0.5" y="1" width="8" height="9.5" rx="1" fill="#d8b030" stroke="#806010" stroke-width="0.8"/><rect x="2.5" y="0" width="4" height="2" fill="#605040"/><path d="M6 5.5H10L13.5 9V11H6Z" fill="#e8e8e8" stroke="#222" stroke-width="0.8"/></svg>
<div class="a" style="left:199px;top:35px;width:44px;height:20px;background:linear-gradient(#f2f2f6,#e2e2ea);border:1px solid #b9b9c6;border-right:none;border-radius:3px 0 0 3px"></div>
<div class="a" style="left:202px;top:38px;width:2px;height:14px;background:repeating-linear-gradient(#8c8c9c 0 1px,#fafafa 1px 2px,transparent 2px 3px)"></div>
<div class="a" style="left:243px;top:35px;width:8px;height:20px;background:linear-gradient(90deg,#8a8aa4,#6c6c8a 40%,#666684);border-radius:0 3px 3px 0"></div>
<div class="a" style="left:205px;top:37px;width:17px;height:16px;background:linear-gradient(#e4e4e8,#b8b8c0);border:1px solid #6a6a72;border-radius:3px"></div>
<div class="a" style="left:223px;top:37px;width:17px;height:16px;background:linear-gradient(#e4e4e8,#b8b8c0);border:1px solid #6a6a72;border-radius:3px"></div>
<svg class="a" style="left:208px;top:39px" width="12" height="12" viewBox="0 0 12 12"><rect x="2" y="2" width="8" height="8" fill="#c0c0c0" stroke="#222"/><path d="M1 1L6 6M6 1V5H10" stroke="#111" stroke-width="1.3" fill="none"/><path d="M3 8H9V11" stroke="#111" fill="none"/></svg>
<svg class="a" style="left:226px;top:39px" width="12" height="12" viewBox="0 0 12 12"><rect x="1" y="2" width="8" height="8" fill="#d8d8d8" stroke="#333"/><path d="M2 4H8M2 6H8" stroke="#888"/><path d="M6 7H10V5L12 7.5L10 10V8H6Z" fill="#111"/></svg>
<div class="a" style="left:252px;top:35px;width:45px;height:20px;background:linear-gradient(#f2f2f6,#e2e2ea);border:1px solid #b9b9c6;border-right:none;border-radius:3px 0 0 3px"></div>
<div class="a" style="left:255px;top:38px;width:2px;height:14px;background:repeating-linear-gradient(#8c8c9c 0 1px,#fafafa 1px 2px,transparent 2px 3px)"></div>
<div class="a" style="left:297px;top:35px;width:8px;height:20px;background:linear-gradient(90deg,#8a8aa4,#6c6c8a 40%,#666684);border-radius:0 3px 3px 0"></div>
<div class="a" style="left:260px;top:37px;width:17px;height:16px;background:linear-gradient(#f4f4f8,#eaeaf0);border:1px solid #e0e0e8;border-radius:2px"></div>
<div class="a" style="left:278px;top:37px;width:17px;height:16px;background:linear-gradient(#f4f4f8,#eaeaf0);border:1px solid #e0e0e8;border-radius:2px"></div>
<svg class="a" style="left:262px;top:39px" width="13" height="12" viewBox="0 0 13 12"><path d="M0.5 6.5L5.5 1L12.5 3.5L11.5 9.5L5 11.5Z" fill="#7078d0" stroke="#30367a" stroke-width="0.9"/><path d="M3 5L8 2.5" stroke="#b0b8f0" stroke-width="1"/><circle cx="8" cy="8" r="3" fill="#1e2450"/><circle cx="8" cy="8" r="1.7" fill="#dfe6ff"/><path d="M7 7.5L9 8.5" stroke="#1e2450" stroke-width="0.8"/></svg>
<svg class="a" style="left:279px;top:39px" width="16" height="12" viewBox="0 0 16 12"><text x="8" y="8.5" text-anchor="middle" font-family="Liberation Sans" font-weight="bold" font-size="9.5" letter-spacing="-0.6" fill="#b80c20" stroke="#b80c20" stroke-width="0.3">4M</text><path d="M3 10.5H13" stroke="#a09898" stroke-width="0.7"/></svg>
<div class="a" style="left:312px;top:35px;width:82px;height:20px;background:linear-gradient(#f2f2f6,#e2e2ea);border:1px solid #b9b9c6;border-right:none;border-radius:3px 0 0 3px"></div>
<div class="a" style="left:315px;top:38px;width:2px;height:14px;background:repeating-linear-gradient(#8c8c9c 0 1px,#fafafa 1px 2px,transparent 2px 3px)"></div>
<div class="a" style="left:394px;top:35px;width:8px;height:20px;background:linear-gradient(90deg,#8a8aa4,#6c6c8a 40%,#666684);border-radius:0 3px 3px 0"></div>
<div class="a" style="left:319px;top:36px;width:18px;height:18px;background:linear-gradient(#d8d8dc,#b0b0b6);border:1px solid #505058;border-radius:3px"></div>
<div class="a" style="left:338px;top:37px;width:17px;height:16px;background:linear-gradient(#f2f2f4 0,#e4e4e8 48%,#b8b8bc 52%,#c4c4c8 100%);border:1px solid #707078;border-radius:3px"></div>
<div class="a" style="left:356px;top:37px;width:17px;height:16px;background:linear-gradient(#f2f2f4 0,#e4e4e8 48%,#b8b8bc 52%,#c4c4c8 100%);border:1px solid #707078;border-radius:3px"></div>
<div class="a" style="left:374px;top:37px;width:17px;height:16px;background:linear-gradient(#f2f2f4 0,#e4e4e8 48%,#b8b8bc 52%,#c4c4c8 100%);border:1px solid #707078;border-radius:3px"></div>
<svg class="a" style="left:321px;top:38px" width="15" height="15" viewBox="0 0 15 15"><rect x="1" y="1.5" width="12" height="11.5" fill="none" stroke="#3a3a3a" stroke-width="1.2"/><rect x="2.8" y="3.5" width="9" height="8" fill="#a8a8ac" stroke="#555" stroke-width="0.6"/><path d="M7.3 4V11M3.3 7.5H11.3" stroke="#f8f8f8" stroke-width="1.5"/><circle cx="13" cy="1.5" r="1.2" fill="#fff"/><path d="M11 13.5L13 13.5L12 12Z" fill="#fff"/></svg>
<svg class="a" style="left:339px;top:39px" width="16" height="13" viewBox="0 0 16 13"><text x="8" y="7.5" text-anchor="middle" font-family="Liberation Serif" font-weight="bold" font-size="8" letter-spacing="-0.4" fill="#2a2a2a">DXF</text><path d="M6 11L8 9L10 11Z" fill="#222"/></svg>
<svg class="a" style="left:358px;top:39px" width="14" height="12" viewBox="0 0 14 12"><path d="M1 11L5 1H7L10 8" fill="#999" stroke="#333" stroke-width="1.2"/><rect x="7" y="6.5" width="4" height="4" fill="#fff" stroke="#222"/><path d="M0 11H13" stroke="#444"/></svg>
<svg class="a" style="left:376px;top:39px" width="14" height="12" viewBox="0 0 14 12"><path d="M2 5L4.5 2L6 4L8.5 1.5L11 4.5" stroke="#333" stroke-width="1" fill="none"/><text x="7" y="11" text-anchor="middle" font-family="Liberation Sans" font-weight="bold" font-size="5.5" fill="#333">CAD</text></svg>
<div class="a" style="left:403px;top:35px;width:63px;height:20px;background:linear-gradient(#f2f2f6,#e2e2ea);border:1px solid #b9b9c6;border-right:none;border-radius:3px 0 0 3px"></div>
<div class="a" style="left:406px;top:38px;width:2px;height:14px;background:repeating-linear-gradient(#8c8c9c 0 1px,#fafafa 1px 2px,transparent 2px 3px)"></div>
<div class="a" style="left:466px;top:35px;width:8px;height:20px;background:linear-gradient(90deg,#8a8aa4,#6c6c8a 40%,#666684);border-radius:0 3px 3px 0"></div>
<div class="a" style="left:410px;top:37px;width:18px;height:16px;background:linear-gradient(#f2f2f4 0,#e4e4e8 48%,#b8b8bc 52%,#c4c4c8 100%);border:1px solid #707078;border-radius:3px"></div>
<div class="a" style="left:429px;top:37px;width:17px;height:16px;background:linear-gradient(#f2f2f4 0,#e4e4e8 48%,#b8b8bc 52%,#c4c4c8 100%);border:1px solid #707078;border-radius:3px"></div>
<div class="a" style="left:447px;top:37px;width:17px;height:16px;background:linear-gradient(#f2f2f4 0,#e4e4e8 48%,#b8b8bc 52%,#c4c4c8 100%);border:1px solid #707078;border-radius:3px"></div>
<svg class="a" style="left:412px;top:39px" width="14" height="12" viewBox="0 0 14 12"><rect x="1.5" y="3.5" width="8" height="7" fill="#c8c8c8" stroke="#333"/><path d="M3 6H8M3 8H8" stroke="#555"/><path d="M6 4Q9 0 12.5 2.5" stroke="#111" stroke-width="1.5" fill="none"/><path d="M12 1L13 4.5L10 3.5Z" fill="#111"/></svg>
<svg class="a" style="left:431px;top:38px" width="13" height="14" viewBox="0 0 13 14"><path d="M6.5 0V14" stroke="#222"/><path d="M6.5 2L11 6.5L6.5 9.5L2 6.5Z" fill="#111"/><path d="M2 6.5L6.5 9.5L11 6.5" fill="#d8d8d8" stroke="#222" stroke-width="0.6"/></svg>
<svg class="a" style="left:449px;top:39px" width="14" height="12" viewBox="0 0 14 12"><path d="M1 9L3 7L5 9" stroke="#888" fill="none"/><path d="M4 3L7 11L11 1.5" stroke="#111" stroke-width="1.6" fill="none"/><path d="M9 7L12.5 1" stroke="#222" stroke-width="1.2"/></svg>
<div class="a" style="left:476px;top:34px;width:57px;height:19px;background:linear-gradient(#f2f2f6,#e2e2ea);border:1px solid #b9b9c6;border-right:none;border-radius:3px 0 0 3px"></div>
<div class="a" style="left:479px;top:37px;width:2px;height:13px;background:repeating-linear-gradient(#8c8c9c 0 1px,#fafafa 1px 2px,transparent 2px 3px)"></div>
<div class="a" style="left:533px;top:34px;width:8px;height:19px;background:linear-gradient(90deg,#8a8aa4,#6c6c8a 40%,#666684);border-radius:0 3px 3px 0"></div>
<div class="a" style="left:484px;top:36px;width:37px;height:15px;background:#fff;border:1px solid #e4e4ec"></div>
<div class="t k" style="left:485px;top:38.8px;font-size:9.6px;transform:scaleX(0.87);transform-origin:0 0;color:#1a1a1a">100%</div>
<div class="a" style="left:521px;top:36px;width:12px;height:15px;background:linear-gradient(#f6f6f8,#e6e6ec);border:1px solid #e0e0e8"></div>
<svg class="a" style="left:525px;top:43px" width="5" height="3" viewBox="0 0 5 3"><path d="M0 0H5L2.5 3Z" fill="#222"/></svg>
<div class="a" style="left:9px;top:57px;width:379px;height:19px;background:linear-gradient(#f2f2f6,#e2e2ea);border:1px solid #b9b9c6;border-right:none;border-radius:3px 0 0 3px"></div>
<div class="a" style="left:12px;top:60px;width:2px;height:13px;background:repeating-linear-gradient(#8c8c9c 0 1px,#fafafa 1px 2px,transparent 2px 3px)"></div>
<div class="a" style="left:388px;top:57px;width:8px;height:19px;background:linear-gradient(90deg,#8a8aa4,#6c6c8a 40%,#666684);border-radius:0 3px 3px 0"></div>
<div class="a" style="left:16px;top:59px;width:16px;height:16px;background:linear-gradient(#f8f8fa,#eeeef2);border:1px solid #dedee6;border-radius:2px"></div>
<div class="a" style="left:34px;top:59px;width:16px;height:16px;background:linear-gradient(#f8f8fa,#eeeef2);border:1px solid #dedee6;border-radius:2px"></div>
<div class="a" style="left:52px;top:59px;width:16px;height:16px;background:linear-gradient(#f8f8fa,#eeeef2);border:1px solid #dedee6;border-radius:2px"></div>
<div class="a" style="left:96px;top:59px;width:17px;height:16px;background:linear-gradient(#f8f8fa,#eeeef2);border:1px solid #dedee6;border-radius:2px"></div>
<div class="a" style="left:114px;top:59px;width:16px;height:16px;background:linear-gradient(#f8f8fa,#eeeef2);border:1px solid #dedee6;border-radius:2px"></div>
<div class="a" style="left:131px;top:59px;width:17px;height:16px;background:linear-gradient(#f8f8fa,#eeeef2);border:1px solid #dedee6;border-radius:2px"></div>
<div class="a" style="left:156px;top:59px;width:25px;height:16px;background:linear-gradient(#f8f8fa,#eeeef2);border:1px solid #dedee6;border-radius:2px"></div>
<div class="a" style="left:183px;top:59px;width:27px;height:16px;background:linear-gradient(#f8f8fa,#eeeef2);border:1px solid #dedee6;border-radius:2px"></div>
<div class="a" style="left:73px;top:59px;width:1px;height:15px;background:#a8a8b8"></div>
<div class="a" style="left:74px;top:59px;width:1px;height:15px;background:#fafafc"></div>
<div class="a" style="left:152px;top:59px;width:1px;height:15px;background:#a8a8b8"></div>
<div class="a" style="left:153px;top:59px;width:1px;height:15px;background:#fafafc"></div>
<div class="a" style="left:213px;top:59px;width:1px;height:15px;background:#a8a8b8"></div>
<div class="a" style="left:214px;top:59px;width:1px;height:15px;background:#fafafc"></div>
<div class="a" style="left:77px;top:59px;width:17px;height:16px;background:linear-gradient(#fcdca0,#f4b860);border:1px solid #c88a30;border-radius:3px"></div>
<div class="t" style="left:20px;top:61.5px;font-family:'Liberation Serif';font-weight:bold;font-size:10.5px;color:#000">B</div>
<div class="t" style="left:39px;top:61.5px;font-family:'Liberation Serif';font-weight:bold;font-style:italic;font-size:10.5px;color:#000">I</div>
<div class="t" style="left:56px;top:61px;font-family:'Liberation Serif';font-weight:bold;font-size:10px;color:#000">U</div>
<div class="a" style="left:56px;top:70px;width:8px;height:1px;background:#111"></div>
<div class="a" style="left:80px;top:62.0px;width:10px;height:1.6px;background:#2c2c2c"></div>
<div class="a" style="left:80px;top:64.6px;width:7px;height:1.6px;background:#2c2c2c"></div>
<div class="a" style="left:80px;top:67.2px;width:10px;height:1.6px;background:#2c2c2c"></div>
<div class="a" style="left:80px;top:69.8px;width:7px;height:1.6px;background:#2c2c2c"></div>
<div class="a" style="left:98px;top:62.0px;width:10px;height:1.6px;background:#2c2c2c"></div>
<div class="a" style="left:99.5px;top:64.6px;width:7px;height:1.6px;background:#2c2c2c"></div>
<div class="a" style="left:98px;top:67.2px;width:10px;height:1.6px;background:#2c2c2c"></div>
<div class="a" style="left:99.5px;top:69.8px;width:7px;height:1.6px;background:#2c2c2c"></div>
<div class="a" style="left:116px;top:62.0px;width:10px;height:1.6px;background:#2c2c2c"></div>
<div class="a" style="left:119px;top:64.6px;width:7px;height:1.6px;background:#2c2c2c"></div>
<div class="a" style="left:116px;top:67.2px;width:10px;height:1.6px;background:#2c2c2c"></div>
<div class="a" style="left:119px;top:69.8px;width:7px;height:1.6px;background:#2c2c2c"></div>
<div class="a" style="left:134px;top:62.0px;width:10px;height:1.6px;background:#2c2c2c"></div>
<div class="a" style="left:134px;top:64.6px;width:10px;height:1.6px;background:#2c2c2c"></div>
<div class="a" style="left:134px;top:67.2px;width:10px;height:1.6px;background:#2c2c2c"></div>
<div class="a" style="left:134px;top:69.8px;width:10px;height:1.6px;background:#2c2c2c"></div>
<svg class="a" style="left:160px;top:59px" width="13" height="12" viewBox="0 0 13 12"><path d="M1.5 6.5Q1 4 3.5 3L7 2Q9 2 9.5 4.5L9 8Q8 10.5 5.5 10Q2.5 9.5 1.5 6.5Z" fill="#eef0f8" stroke="#2a3468" stroke-width="1.2"/><path d="M4 3.5Q3.5 0.5 5.5 0.8Q7 1.2 6.5 4" stroke="#2a3468" stroke-width="1.1" fill="none"/><path d="M9 4Q12.5 5 11.5 10Q11 7 8.5 7.5Z" fill="#27338a"/></svg>
<svg class="a" style="left:176px;top:65px" width="5" height="3" viewBox="0 0 5 3"><path d="M0 0H5L2.5 3Z" fill="#111"/></svg>
<div class="t" style="left:188.5px;top:59.3px;font-family:'Liberation Serif';font-weight:bold;font-size:11px;color:#1a2660">A</div>
<div class="a" style="left:188px;top:70.5px;width:10px;height:3px;background:#000"></div>
<svg class="a" style="left:203px;top:65px" width="5" height="3" viewBox="0 0 5 3"><path d="M0 0H5L2.5 3Z" fill="#111"/></svg>
<div class="a" style="left:218px;top:58px;width:124px;height:17px;background:#fff;border:1px solid #e4e4ec"></div>
<div class="t" style="left:219px;top:61.5px;font-size:9.3px;color:#1a1a1a">ARIAL</div>
<div class="a" style="left:342px;top:58px;width:11px;height:17px;background:linear-gradient(#f6f6f8,#e6e6ec);border:1px solid #dcdce4"></div>
<svg class="a" style="left:345px;top:66px" width="5" height="3" viewBox="0 0 5 3"><path d="M0 0H5L2.5 3Z" fill="#222"/></svg>
<div class="a" style="left:353px;top:58px;width:22px;height:17px;background:#fff;border:1px solid #e4e4ec"></div>
<div class="t" style="left:355px;top:61.5px;font-size:9.3px;color:#1a1a1a">9</div>
<div class="a" style="left:375px;top:58px;width:11px;height:17px;background:linear-gradient(#f6f6f8,#e6e6ec);border:1px solid #dcdce4"></div>
<svg class="a" style="left:378px;top:66px" width="5" height="3" viewBox="0 0 5 3"><path d="M0 0H5L2.5 3Z" fill="#222"/></svg>
<div class="a" style="left:397px;top:57px;width:46px;height:19px;background:linear-gradient(#f2f2f6,#e2e2ea);border:1px solid #b9b9c6;border-right:none;border-radius:3px 0 0 3px"></div>
<div class="a" style="left:400px;top:60px;width:2px;height:13px;background:repeating-linear-gradient(#8c8c9c 0 1px,#fafafa 1px 2px,transparent 2px 3px)"></div>
<div class="a" style="left:443px;top:57px;width:8px;height:19px;background:linear-gradient(90deg,#8a8aa4,#6c6c8a 40%,#666684);border-radius:0 3px 3px 0"></div>
<div class="a" style="left:404px;top:59px;width:17px;height:16px;background:linear-gradient(#f8f8fa,#eeeef2);border:1px solid #dedee6;border-radius:2px"></div>
<div class="a" style="left:423px;top:59px;width:17px;height:16px;background:linear-gradient(#f8f8fa,#eeeef2);border:1px solid #dedee6;border-radius:2px"></div>
<svg class="a" style="left:407px;top:61px" width="11" height="11" viewBox="0 0 11 11"><path d="M2.5 5Q3 1.5 6 1.5Q9 1.5 9 5Q9 8 6 10" stroke="#2050a0" stroke-width="2" fill="none"/><path d="M0 3.5L5 3.5L2.5 7Z" fill="#2050a0"/></svg>
<svg class="a" style="left:426px;top:61px" width="11" height="11" viewBox="0 0 11 11"><path d="M8.5 5Q8 1.5 5 1.5Q2 1.5 2 5Q2 8 5 10" stroke="#2050a0" stroke-width="2" fill="none"/><path d="M11 3.5L6 3.5L8.5 7Z" fill="#2050a0"/></svg>
<div class="a" style="left:452px;top:57px;width:242px;height:19px;background:linear-gradient(#f2f2f6,#e2e2ea);border:1px solid #b9b9c6;border-right:none;border-radius:3px 0 0 3px"></div>
<div class="a" style="left:455px;top:60px;width:2px;height:13px;background:repeating-linear-gradient(#8c8c9c 0 1px,#fafafa 1px 2px,transparent 2px 3px)"></div>
<div class="a" style="left:694px;top:57px;width:8px;height:19px;background:linear-gradient(90deg,#8a8aa4,#6c6c8a 40%,#666684);border-radius:0 3px 3px 0"></div>
<div class="a" style="left:459px;top:58px;width:90px;height:17px;background:linear-gradient(#f2f2f4 0,#e8e8ea 48%,#acacb0 52%,#bcbcc0);border:1px solid #8e8e9a;border-radius:2px"></div>
<svg class="a" style="left:465px;top:60px" width="11" height="13" viewBox="0 0 11 13"><rect x="1.5" y="0.5" width="8" height="12" fill="#9a9a9e" stroke="#505058"/><rect x="3" y="2" width="5" height="2" fill="#d0d0d4"/><path d="M3 6H8M3 8H8M3 10H8" stroke="#606068"/></svg>
<div class="t" style="left:484px;top:61.5px;font-size:9.33px;font-weight:bold;color:#606068">Calculations</div>
<div class="a" style="left:549px;top:58px;width:144px;height:17px;background:linear-gradient(#f6f6f8,#ececf0);border:1px solid #d0d0d8;border-radius:2px"></div>
<svg class="a" style="left:579px;top:60px" width="11" height="13" viewBox="0 0 11 13"><path d="M0.5 0.5H7.5L10.5 3.5V12.5H0.5Z" fill="#fafafa" stroke="#222"/><path d="M2.5 4H6M2.5 6H8M2.5 8H8M2.5 10H8" stroke="#888"/></svg>
<div class="t" style="left:598px;top:61.5px;font-size:9.43px;font-weight:bold;color:#141414">Group Results</div>
</body></html>
